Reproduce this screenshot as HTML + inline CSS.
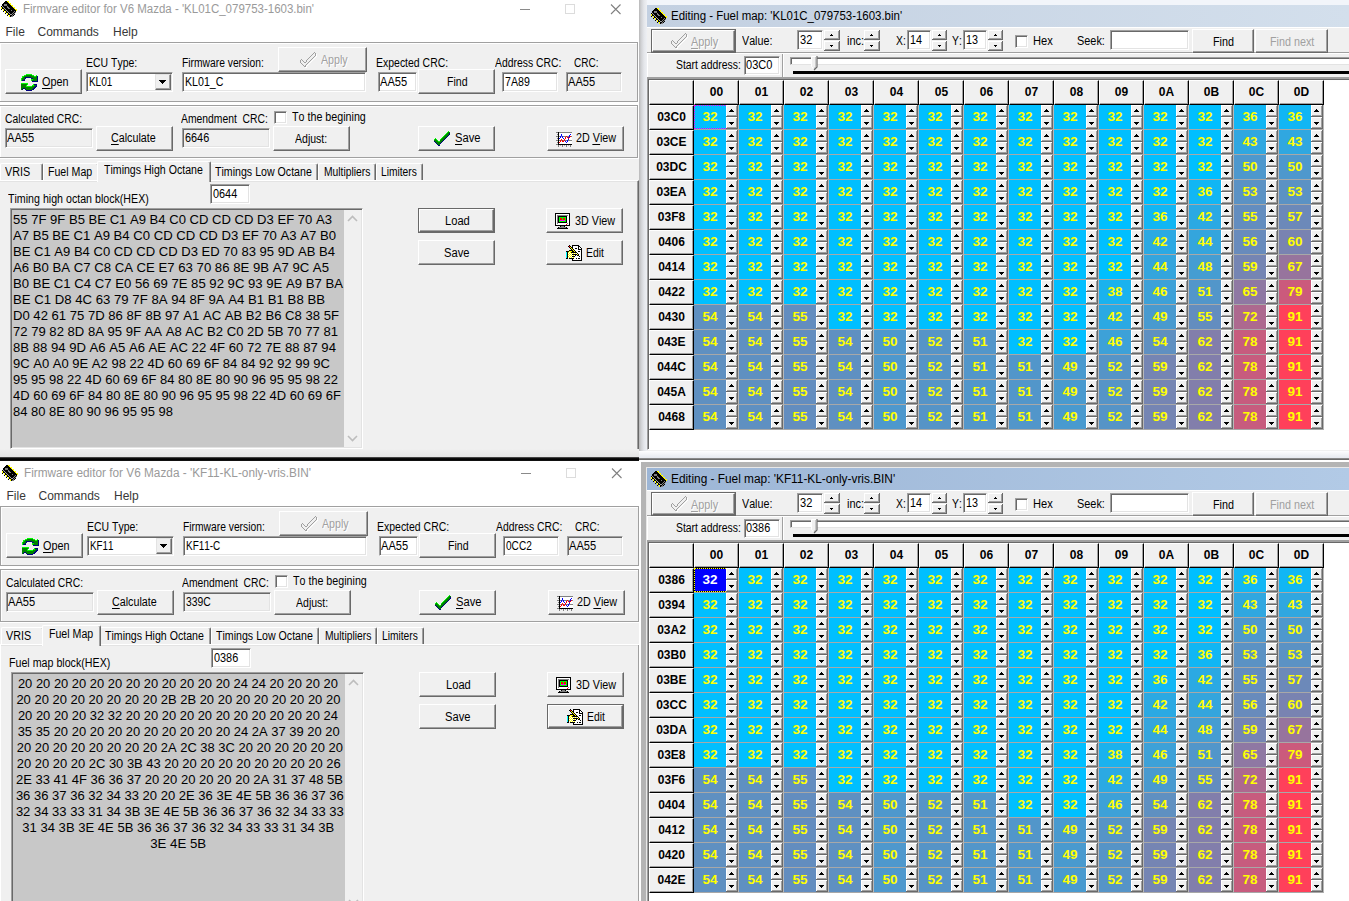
<!DOCTYPE html>
<html><head><meta charset="utf-8"><title>Firmware editor</title>
<style>
*{box-sizing:border-box;margin:0;padding:0}
html,body{width:1349px;height:901px;overflow:hidden;background:#fff}
body{position:relative;font-family:"Liberation Sans",sans-serif;color:#000}
.a{position:absolute}
.w{position:absolute;overflow:hidden}
/* MS Sans Serif-like label text: tall narrow */
.t{position:absolute;white-space:nowrap;font-kerning:none;font-size:12.5px;line-height:14px;height:14px;transform:scaleX(.83);transform-origin:0 0;color:#000}
.t u{text-decoration:none;border-bottom:1px solid #000;display:inline-block;line-height:12.6px;height:13.3px}
.dis{color:#a0a0a0}
.seg{position:absolute;white-space:nowrap;font-size:12px;line-height:14px;height:14px;transform-origin:0 0}
.btn{position:absolute;background:#f0f0f0;border-top:1px solid #fff;border-left:1px solid #fff;border-right:1px solid #696969;border-bottom:1px solid #696969;box-shadow:inset -1px -1px 0 #a0a0a0}
.def{position:absolute;background:#696969}
.inp{position:absolute;background:#fff;border-top:1px solid #a0a0a0;border-left:1px solid #a0a0a0;border-right:1px solid #fff;border-bottom:1px solid #fff;box-shadow:inset 1px 1px 0 #696969,inset -1px -1px 0 #e3e3e3}
.ro{background:#f0f0f0}
.pan{position:absolute;background:#f0f0f0;border:1px solid #a0a0a0;box-shadow:1px 1px 0 #fff,inset 1px 1px 0 #fff}
.chk{position:absolute;width:13px;height:13px;background:#fff;border-top:1px solid #a0a0a0;border-left:1px solid #a0a0a0;border-right:1px solid #fff;border-bottom:1px solid #fff;box-shadow:inset 1px 1px 0 #696969,inset -1px -1px 0 #e3e3e3}
.hx{position:absolute;font-kerning:none;font-size:13.33px;line-height:16px;white-space:nowrap;color:#000}
.hx div{height:16px}
/* grid */
.hc{position:absolute;background:#f0f0f0;border-top:1px solid #fff;border-left:1px solid #fff;border-right:1px solid #000;border-bottom:1px solid #000;box-shadow:inset -1px -1px 0 #a0a0a0;font-weight:bold;font-size:12px;text-align:center}
.c{position:absolute;width:45px;height:25px;border-right:1px solid #b8b8b8;border-bottom:1px solid #a8a8a8;font-weight:bold;font-size:13.5px;line-height:24px;color:#ff0;padding-right:12px;text-align:center}
.c i{position:absolute;left:32px;top:0;width:12px;height:24px}
.sp{position:absolute;width:11px;background:#f0f0f0;border-top:1px solid #fff;border-left:1px solid #fff;border-right:1px solid #696969;border-bottom:1px solid #696969;box-shadow:inset -1px -1px 0 #a0a0a0}
.c i{background:linear-gradient(#000,#000) 5px 4px/1px 1px no-repeat,linear-gradient(#000,#000) 4px 5px/3px 1px no-repeat,linear-gradient(#000,#000) 3px 6px/5px 1px no-repeat,linear-gradient(#000,#000) 3px 17px/5px 1px no-repeat,linear-gradient(#000,#000) 4px 18px/3px 1px no-repeat,linear-gradient(#000,#000) 5px 19px/1px 1px no-repeat,linear-gradient(#696969,#696969) 11px 0px/1px 12px no-repeat,linear-gradient(#696969,#696969) 0px 11px/12px 1px no-repeat,linear-gradient(#a0a0a0,#a0a0a0) 10px 1px/1px 10px no-repeat,linear-gradient(#a0a0a0,#a0a0a0) 1px 10px/10px 1px no-repeat,linear-gradient(#fff,#fff) 0px 0px/12px 1px no-repeat,linear-gradient(#fff,#fff) 0px 0px/1px 12px no-repeat,linear-gradient(#696969,#696969) 11px 12px/1px 12px no-repeat,linear-gradient(#696969,#696969) 0px 23px/12px 1px no-repeat,linear-gradient(#a0a0a0,#a0a0a0) 10px 13px/1px 10px no-repeat,linear-gradient(#a0a0a0,#a0a0a0) 1px 22px/10px 1px no-repeat,linear-gradient(#fff,#fff) 0px 12px/12px 1px no-repeat,linear-gradient(#fff,#fff) 0px 12px/1px 12px no-repeat,#f0f0f0}
.tsp{position:absolute;width:16px;height:21px;background:linear-gradient(#000,#000) 7px 4px/1px 1px no-repeat,linear-gradient(#000,#000) 6px 5px/3px 1px no-repeat,linear-gradient(#000,#000) 6px 15px/3px 1px no-repeat,linear-gradient(#000,#000) 7px 16px/1px 1px no-repeat,linear-gradient(#696969,#696969) 15px 0px/1px 10px no-repeat,linear-gradient(#696969,#696969) 0px 9px/16px 1px no-repeat,linear-gradient(#a0a0a0,#a0a0a0) 14px 1px/1px 8px no-repeat,linear-gradient(#a0a0a0,#a0a0a0) 1px 8px/14px 1px no-repeat,linear-gradient(#fff,#fff) 0px 0px/16px 1px no-repeat,linear-gradient(#fff,#fff) 0px 0px/1px 10px no-repeat,linear-gradient(#696969,#696969) 15px 11px/1px 10px no-repeat,linear-gradient(#696969,#696969) 0px 20px/16px 1px no-repeat,linear-gradient(#a0a0a0,#a0a0a0) 14px 12px/1px 8px no-repeat,linear-gradient(#a0a0a0,#a0a0a0) 1px 19px/14px 1px no-repeat,linear-gradient(#fff,#fff) 0px 11px/16px 1px no-repeat,linear-gradient(#fff,#fff) 0px 11px/1px 10px no-repeat,#f0f0f0}
.tsp.n{width:15px;background:linear-gradient(#000,#000) 7px 4px/1px 1px no-repeat,linear-gradient(#000,#000) 6px 5px/3px 1px no-repeat,linear-gradient(#000,#000) 6px 15px/3px 1px no-repeat,linear-gradient(#000,#000) 7px 16px/1px 1px no-repeat,linear-gradient(#696969,#696969) 14px 0px/1px 10px no-repeat,linear-gradient(#696969,#696969) 0px 9px/15px 1px no-repeat,linear-gradient(#a0a0a0,#a0a0a0) 13px 1px/1px 8px no-repeat,linear-gradient(#a0a0a0,#a0a0a0) 1px 8px/13px 1px no-repeat,linear-gradient(#fff,#fff) 0px 0px/15px 1px no-repeat,linear-gradient(#fff,#fff) 0px 0px/1px 10px no-repeat,linear-gradient(#696969,#696969) 14px 11px/1px 10px no-repeat,linear-gradient(#696969,#696969) 0px 20px/15px 1px no-repeat,linear-gradient(#a0a0a0,#a0a0a0) 13px 12px/1px 8px no-repeat,linear-gradient(#a0a0a0,#a0a0a0) 1px 19px/13px 1px no-repeat,linear-gradient(#fff,#fff) 0px 11px/15px 1px no-repeat,linear-gradient(#fff,#fff) 0px 11px/1px 10px no-repeat,#f0f0f0}
.v32{background:#00bfff}.v36{background:#11b6f4}.v38{background:#1ab2ee}.v42{background:#2ba9e3}.v43{background:#30a7e0}.v44{background:#34a5dd}.v46{background:#3da1d8}.v48{background:#459dd2}.v49{background:#499acf}.v50{background:#4e98cd}.v51{background:#5296ca}.v52{background:#5694c7}.v53{background:#5b92c4}.v54{background:#5f90c1}.v55{background:#638dbf}.v56{background:#688bbc}.v57{background:#6c89b9}.v59{background:#7585b3}.v60{background:#7983b1}.v62{background:#827eab}.v65{background:#8f78a3}.v67{background:#97749d}.v72{background:#ad698f}.v78{background:#c75c7e}.v79{background:#cb5a7c}.v91{background:#ff405a}
.foc{position:absolute;left:0;top:0;width:32px;height:24px;border:1px dotted #f0f;border-right:none !important;pointer-events:none}
</style></head>
<body>
<div class="w" style="left:-1px;top:0px;width:640px;height:461px;background:#fff"><div class="a" style="left:1px;top:0">
<svg class="a" style="left:0px;top:0px" width="18" height="18" viewBox="0 0 18 18" shape-rendering="crispEdges"><path fill="#000" d="M5 1h2v1h-2zM4 2h4v1h-4zM3 3h6v1h-6zM2 4h2v1h-2zM7 4h3v1h-3zM2 5h2v1h-2zM7 5h4v1h-4zM1 6h1v1h-1zM3 6h4v1h-4zM8 6h4v1h-4zM2 7h1v1h-1zM4 7h3v1h-3zM9 7h4v1h-4zM2 8h2v1h-2zM5 8h3v1h-3zM10 8h4v1h-4zM1 9h1v1h-1zM4 9h1v1h-1zM6 9h9v1h-9zM4 10h2v1h-2zM7 10h4v1h-4zM12 10h4v1h-4zM3 11h1v1h-1zM6 11h1v1h-1zM8 11h6v1h-6zM15 11h1v1h-1zM6 12h2v1h-2zM9 12h4v1h-4zM14 12h1v1h-1zM5 13h1v1h-1zM8 13h1v1h-1zM10 13h2v1h-2zM13 13h1v1h-1zM8 14h2v1h-2zM12 14h1v1h-1zM14 14h1v1h-1zM7 15h1v1h-1zM10 15h2v1h-2zM13 15h1v1h-1zM10 16h1v1h-1z"/><path fill="#ff0" d="M7 1h2v1h-2zM8 2h1v1h-1zM9 3h2v1h-2zM10 4h1v1h-1zM11 5h2v1h-2zM12 6h1v1h-1zM1 7h1v1h-1zM13 7h2v1h-2zM1 8h1v1h-1zM14 8h1v1h-1zM3 9h1v1h-1zM15 9h2v1h-2zM3 10h1v1h-1zM16 10h1v1h-1zM5 11h1v1h-1zM5 12h1v1h-1zM7 13h1v1h-1zM7 14h1v1h-1zM9 15h1v1h-1zM9 16h1v1h-1z"/><path fill="#808080" d="M4 4h3v1h-3zM4 5h3v1h-3zM7 6h1v1h-1zM7 7h2v1h-2zM8 8h2v1h-2zM11 10h1v1h-1zM14 11h1v1h-1zM13 12h1v1h-1zM15 12h1v1h-1zM12 13h1v1h-1zM14 13h1v1h-1zM13 14h1v1h-1zM12 15h1v1h-1zM11 16h2v1h-2z"/><path fill="#a0a0a0" d="M2 6h1v1h-1zM3 7h1v1h-1zM4 8h1v1h-1zM5 9h1v1h-1zM6 10h1v1h-1zM7 11h1v1h-1zM8 12h1v1h-1zM9 13h1v1h-1zM10 14h2v1h-2z"/></svg>
<span class="seg" style="left:22.5px;top:2.3px;color:#9a9a9a;font-size:12px;transform:scaleX(0.9570);">Firmvare editor for V6 Mazda - 'KL01C_079753-1603.bin'</span>
<svg class="a" style="left:515px;top:0" width="115" height="20" viewBox="0 0 115 20" fill="none"><path d="M5 9.5H15" stroke="#8a8a8a" stroke-width="1"/><rect x="50.5" y="4.5" width="9" height="9" stroke="#dcdcdc" stroke-width="1"/><path d="M96 4.5L105.5 14M105.5 4.5L96 14" stroke="#808080" stroke-width="1.1"/></svg>
<span class="seg" style="left:5.5px;top:24.8px;color:#383838;font-size:12px;">File</span>
<span class="seg" style="left:37.5px;top:24.8px;color:#383838;font-size:12px;">Commands</span>
<span class="seg" style="left:113.0px;top:24.8px;color:#383838;font-size:12px;">Help</span>
<div class="a" style="left:-1px;top:159px;width:640px;height:302px;background:#f0f0f0;"></div>
<div class="pan" style="left:-1px;top:42px;width:639px;height:60px"></div>
<div class="btn" style="left:5px;top:69px;width:77px;height:25px"></div>
<svg class="a" style="left:18px;top:72px" width="24" height="20" viewBox="0 0 24 20" shape-rendering="crispEdges"><path fill="#00ff00" d="M8 2h6v1h-6zM6 3h2v1h-2zM14 3h2v1h-2zM18 3h1v1h-1zM4 4h2v1h-2zM16 4h2v1h-2zM4 5h1v1h-1zM3 6h1v1h-1zM3 7h1v1h-1zM13 7h2v1h-2zM3 8h1v1h-1zM13 8h1v1h-1zM3 11h7v1h-7zM9 12h1v1h-1zM15 12h1v1h-1zM8 13h1v1h-1zM14 13h2v1h-2zM8 14h6v1h-6z"/><path fill="#008000" d="M8 3h6v1h-6zM6 4h10v1h-10zM18 4h1v1h-1zM5 5h2v1h-2zM13 5h6v1h-6zM4 6h3v1h-3zM15 6h4v1h-4zM4 7h2v1h-2zM15 7h4v1h-4zM14 8h5v1h-5zM3 12h6v1h-6zM3 13h5v1h-5zM16 13h2v1h-2zM3 14h5v1h-5zM14 14h3v1h-3zM3 15h13v1h-13zM3 16h2v1h-2zM7 16h8v1h-8zM3 17h1v1h-1zM8 17h6v1h-6z"/><path fill="#000080" d="M19 4h1v1h-1zM7 5h6v1h-6zM19 5h1v1h-1zM7 6h1v1h-1zM13 6h2v1h-2zM19 6h1v1h-1zM6 7h1v1h-1zM19 7h1v1h-1zM4 8h3v1h-3zM19 8h1v1h-1zM14 9h6v1h-6zM16 12h3v1h-3zM18 13h1v1h-1zM17 14h2v1h-2zM16 15h2v1h-2zM5 16h2v1h-2zM15 16h2v1h-2zM4 17h1v1h-1zM7 17h1v1h-1zM14 17h2v1h-2zM8 18h6v1h-6z"/></svg>
<span class="t " style="left:41.6px;top:74.7px;transform:scaleX(0.8662);"><u>O</u>pen</span>
<span class="t " style="left:86.2px;top:55.7px;transform:scaleX(0.8374);">ECU Type:</span>
<div class="inp" style="left:86px;top:72px;width:87px;height:20px;"></div>
<span class="t " style="left:89.1px;top:74.7px;transform:scaleX(0.7944);">KL01</span>
<div class="btn" style="left:155px;top:74px;width:16px;height:16px;border-top-color:#e3e3e3;border-left-color:#e3e3e3"></div>
<svg class="a" style="left:159px;top:80px" width="7" height="4" viewBox="0 0 7 4" shape-rendering="crispEdges"><path d="M0 0H7V1H6V2H5V3H4V4H3V3H2V2H1V1H0Z" fill="#000"/></svg>
<span class="t " style="left:181.8px;top:55.7px;transform:scaleX(0.8235);">Firmware version:</span>
<div class="inp" style="left:182px;top:72px;width:184px;height:20px;"></div>
<span class="t " style="left:185.0px;top:74.7px;transform:scaleX(0.8520);">KL01_C</span>
<div class="btn" style="left:278px;top:47px;width:89px;height:25px"></div>
<svg class="a" style="left:296px;top:49px" width="24" height="20" viewBox="0 0 24 20" shape-rendering="crispEdges"><path fill="#a0a0a0" d="M18 3h1v1h-1zM17 4h1v1h-1zM19 4h1v1h-1zM16 5h1v1h-1zM19 5h1v1h-1zM15 6h1v1h-1zM19 6h1v1h-1zM14 7h1v1h-1zM18 7h1v1h-1zM13 8h1v1h-1zM17 8h1v1h-1zM12 9h1v1h-1zM16 9h1v1h-1zM5 10h1v1h-1zM11 10h1v1h-1zM15 10h1v1h-1zM4 11h1v1h-1zM6 11h1v1h-1zM10 11h1v1h-1zM14 11h1v1h-1zM4 12h1v1h-1zM7 12h1v1h-1zM10 12h1v1h-1zM13 12h1v1h-1zM4 13h1v1h-1zM8 13h2v1h-2zM12 13h1v1h-1zM5 14h1v1h-1zM11 14h1v1h-1zM6 15h1v1h-1zM10 15h1v1h-1zM7 16h1v1h-1zM9 16h1v1h-1zM8 17h2v1h-2z"/><path fill="#f0f0f0" d="M18 4h1v1h-1zM17 5h2v1h-2zM16 6h3v1h-3zM15 7h3v1h-3zM14 8h3v1h-3zM13 9h3v1h-3zM12 10h3v1h-3zM5 11h1v1h-1zM11 11h3v1h-3zM5 12h2v1h-2zM11 12h2v1h-2zM5 13h3v1h-3zM10 13h2v1h-2zM6 14h5v1h-5zM7 15h3v1h-3zM8 16h1v1h-1z"/><path fill="#fff" d="M20 5h1v1h-1zM20 6h1v1h-1zM20 7h1v1h-1zM19 8h1v1h-1zM18 9h1v1h-1zM17 10h1v1h-1zM16 11h1v1h-1zM15 12h1v1h-1zM14 13h1v1h-1zM13 14h1v1h-1zM12 15h1v1h-1zM11 16h1v1h-1zM10 17h1v1h-1zM9 18h2v1h-2z"/></svg>
<span class="t dis" style="left:321.5px;top:53.7px;transform:scaleX(0.8503);color:#fff">Apply</span>
<span class="t dis" style="left:320.5px;top:52.7px;transform:scaleX(0.8503);">Apply</span>
<span class="t " style="left:375.9px;top:55.7px;transform:scaleX(0.8380);">Expected CRC:</span>
<div class="inp" style="left:378px;top:72px;width:39px;height:20px;"></div>
<span class="t " style="left:379.9px;top:74.7px;transform:scaleX(0.8891);">AA55</span>
<div class="btn" style="left:418px;top:69px;width:77px;height:25px"></div>
<span class="t " style="left:446.9px;top:74.7px;transform:scaleX(0.8468);">Find</span>
<span class="t " style="left:495.3px;top:55.7px;transform:scaleX(0.8311);">Address CRC:</span>
<div class="inp" style="left:502px;top:72px;width:56px;height:20px;"></div>
<span class="t " style="left:504.9px;top:74.7px;transform:scaleX(0.8492);">7A89</span>
<span class="t " style="left:573.5px;top:55.7px;transform:scaleX(0.8049);">CRC:</span>
<div class="inp ro" style="left:566px;top:72px;width:56px;height:20px;"></div>
<span class="t " style="left:567.9px;top:74.7px;transform:scaleX(0.8891);">AA55</span>
<div class="pan" style="left:-1px;top:105px;width:639px;height:53px"></div>
<span class="t " style="left:4.9px;top:111.7px;transform:scaleX(0.8293);">Calculated CRC:</span>
<div class="inp ro" style="left:5px;top:128px;width:88px;height:20px;"></div>
<span class="t " style="left:7.1px;top:130.7px;transform:scaleX(0.8891);">AA55</span>
<div class="btn" style="left:96px;top:126px;width:77px;height:25px"></div>
<span class="t " style="left:111.3px;top:130.7px;transform:scaleX(0.8595);"><u>C</u>alculate</span>
<span class="t " style="left:181.3px;top:111.7px;transform:scaleX(0.8274);">Amendment&nbsp; CRC:</span>
<div class="inp ro" style="left:182px;top:128px;width:88px;height:20px;"></div>
<span class="t " style="left:184.7px;top:130.7px;transform:scaleX(0.8701);">6646</span>
<div class="chk" style="left:274px;top:111px"></div>
<span class="t " style="left:292.3px;top:109.7px;transform:scaleX(0.8563);">To the begining</span>
<div class="btn" style="left:273px;top:126px;width:77px;height:25px"></div>
<span class="t " style="left:295.3px;top:131.7px;transform:scaleX(0.8425);">Adjust:</span>
<div class="btn" style="left:418px;top:126px;width:77px;height:25px"></div>
<svg class="a" style="left:430px;top:128px" width="24" height="20" viewBox="0 0 24 20" shape-rendering="crispEdges"><path fill="#00ff00" d="M18 3h1v1h-1zM17 4h1v1h-1zM16 5h1v1h-1zM15 6h1v1h-1zM14 7h1v1h-1zM13 8h1v1h-1zM12 9h1v1h-1zM5 10h1v1h-1zM11 10h1v1h-1zM4 11h1v1h-1zM6 11h1v1h-1zM10 11h1v1h-1zM7 12h1v1h-1zM8 13h2v1h-2z"/><path fill="#008000" d="M18 4h2v1h-2zM17 5h2v1h-2zM16 6h3v1h-3zM15 7h3v1h-3zM14 8h3v1h-3zM13 9h3v1h-3zM12 10h3v1h-3zM5 11h1v1h-1zM11 11h3v1h-3zM4 12h3v1h-3zM10 12h3v1h-3zM5 13h3v1h-3zM10 13h2v1h-2zM6 14h5v1h-5zM7 15h3v1h-3zM8 16h2v1h-2z"/><path fill="#000080" d="M19 5h1v1h-1zM19 6h1v1h-1zM18 7h1v1h-1zM17 8h1v1h-1zM16 9h1v1h-1zM15 10h1v1h-1zM14 11h1v1h-1zM13 12h1v1h-1zM4 13h1v1h-1zM12 13h1v1h-1zM5 14h1v1h-1zM11 14h1v1h-1zM6 15h1v1h-1zM10 15h1v1h-1zM7 16h1v1h-1zM8 17h2v1h-2z"/></svg>
<span class="t " style="left:454.6px;top:131.0px;transform:scaleX(0.8947);"><u>S</u>ave</span>
<div class="btn" style="left:547px;top:126px;width:77px;height:25px"></div>
<svg class="a" style="left:553px;top:129px" width="24" height="20" viewBox="0 0 24 20" shape-rendering="crispEdges"><path fill="#808080" d="M3 3h2v1h-2zM6 3h13v1h-13zM4 5h1v1h-1zM3 7h2v1h-2zM6 7h1v1h-1zM8 7h1v1h-1zM10 7h3v1h-3zM14 7h2v1h-2zM18 7h1v1h-1zM4 9h1v1h-1zM3 11h2v1h-2zM6 11h1v1h-1zM8 11h1v1h-1zM10 11h1v1h-1zM12 11h2v1h-2zM15 11h4v1h-4zM4 13h1v1h-1zM3 15h2v1h-2zM5 16h1v1h-1zM9 16h1v1h-1zM13 16h1v1h-1zM17 16h1v1h-1zM5 17h1v1h-1zM9 17h1v1h-1zM13 17h1v1h-1zM17 17h1v1h-1z"/><path fill="#000" d="M5 3h1v1h-1zM5 4h1v1h-1zM5 5h1v1h-1zM5 6h1v1h-1zM5 7h1v1h-1zM5 8h1v1h-1zM5 9h1v1h-1zM5 10h1v1h-1zM5 11h1v1h-1zM5 12h1v1h-1zM5 13h1v1h-1zM5 14h1v1h-1zM5 15h14v1h-14z"/><path fill="#fff" d="M6 4h13v1h-13zM6 5h2v1h-2zM9 5h8v1h-8zM18 5h1v1h-1zM6 6h2v1h-2zM9 6h7v1h-7zM17 6h2v1h-2zM6 8h1v1h-1zM8 8h1v1h-1zM10 8h2v1h-2zM13 8h1v1h-1zM17 8h2v1h-2zM7 9h3v1h-3zM11 9h1v1h-1zM13 9h2v1h-2zM16 9h3v1h-3zM6 10h2v1h-2zM9 10h2v1h-2zM12 10h3v1h-3zM16 10h3v1h-3zM6 12h1v1h-1zM8 12h1v1h-1zM11 12h1v1h-1zM13 12h1v1h-1zM15 12h4v1h-4zM7 13h6v1h-6zM14 13h5v1h-5zM6 14h13v1h-13z"/><path fill="#00f" d="M8 5h1v1h-1zM17 5h1v1h-1zM8 6h1v1h-1zM16 6h1v1h-1zM7 7h1v1h-1zM9 7h1v1h-1zM16 7h1v1h-1zM7 8h1v1h-1zM9 8h1v1h-1zM15 8h1v1h-1zM6 9h1v1h-1zM10 9h1v1h-1zM15 10h1v1h-1zM14 11h1v1h-1zM12 12h1v1h-1zM14 12h1v1h-1zM13 13h1v1h-1z"/><path fill="#f00" d="M13 7h1v1h-1zM17 7h1v1h-1zM12 8h1v1h-1zM14 8h1v1h-1zM16 8h1v1h-1zM12 9h1v1h-1zM15 9h1v1h-1zM8 10h1v1h-1zM11 10h1v1h-1zM7 11h1v1h-1zM9 11h1v1h-1zM11 11h1v1h-1zM7 12h1v1h-1zM9 12h2v1h-2zM6 13h1v1h-1z"/><path fill="#b0b0b0" d="M7 16h1v1h-1zM11 16h1v1h-1zM15 16h1v1h-1z"/></svg>
<span class="t " style="left:576.0px;top:131.0px;transform:scaleX(0.8615);">2D <u>V</u>iew</span>
<div class="a" style="left:-1px;top:180px;width:640px;height:286px;background:#f0f0f0;border-top:1px solid #fff;border-left:1px solid #fff;border-right:1px solid #696969;box-shadow:inset -1px 0 0 #a0a0a0, inset 0 1px 0 #e3e3e3"></div>
<div class="a" style="left:0px;top:163px;width:43px;height:17px;background:#f0f0f0;border-top:1px solid #fff;border-left:1px solid #fff;border-right:1px solid #696969;box-shadow:inset -1px 0 0 #a0a0a0;border-radius:2px 2px 0 0"></div>
<span class="t " style="left:5.3px;top:164.7px;transform:scaleX(0.8634);">VRIS</span>
<div class="a" style="left:43px;top:163px;width:56px;height:17px;background:#f0f0f0;border-top:1px solid #fff;border-left:1px solid #fff;border-right:1px solid #696969;box-shadow:inset -1px 0 0 #a0a0a0;border-radius:2px 2px 0 0"></div>
<span class="t " style="left:47.9px;top:164.7px;transform:scaleX(0.8482);">Fuel Map</span>
<div class="a" style="left:210px;top:163px;width:108px;height:17px;background:#f0f0f0;border-top:1px solid #fff;border-left:1px solid #fff;border-right:1px solid #696969;box-shadow:inset -1px 0 0 #a0a0a0;border-radius:2px 2px 0 0"></div>
<span class="t " style="left:215.3px;top:164.7px;transform:scaleX(0.8496);">Timings Low Octane</span>
<div class="a" style="left:318px;top:163px;width:58px;height:17px;background:#f0f0f0;border-top:1px solid #fff;border-left:1px solid #fff;border-right:1px solid #696969;box-shadow:inset -1px 0 0 #a0a0a0;border-radius:2px 2px 0 0"></div>
<span class="t " style="left:323.7px;top:164.7px;transform:scaleX(0.8247);">Multipliers</span>
<div class="a" style="left:376px;top:163px;width:47px;height:17px;background:#f0f0f0;border-top:1px solid #fff;border-left:1px solid #fff;border-right:1px solid #696969;box-shadow:inset -1px 0 0 #a0a0a0;border-radius:2px 2px 0 0"></div>
<span class="t " style="left:381.3px;top:164.7px;transform:scaleX(0.8180);">Limiters</span>
<div class="a" style="left:97px;top:161px;width:114px;height:21px;background:#f0f0f0;border-top:1px solid #fff;border-left:1px solid #fff;border-right:1px solid #696969;box-shadow:inset -1px 0 0 #a0a0a0;border-radius:2px 2px 0 0"></div>
<span class="t " style="left:104.3px;top:162.7px;transform:scaleX(0.8465);">Timings High Octane</span>
<span class="t " style="left:8.3px;top:191.7px;transform:scaleX(0.8515);">Timing high octan block(HEX)</span>
<div class="inp" style="left:210px;top:184px;width:40px;height:20px;"></div>
<span class="t " style="left:212.9px;top:186.7px;transform:scaleX(0.8701);">0644</span>
<div class="inp" style="left:10px;top:208px;width:353px;height:241px;background:#f0f0f0"></div>
<div class="a" style="left:12px;top:210px;width:332px;height:237px;background:#c8c8c8;"></div>
<svg class="a" style="left:347px;top:215px" width="11" height="7" viewBox="0 0 11 7"><path d="M1 6L5.5 1.5L10 6" fill="none" stroke="#bdbdbd" stroke-width="1.6"/></svg>
<svg class="a" style="left:347px;top:435px" width="11" height="7" viewBox="0 0 11 7"><path d="M1 1L5.5 5.5L10 1" fill="none" stroke="#bdbdbd" stroke-width="1.6"/></svg>
<div class="hx" style="left:12.9px;top:211.7px">
<div><span style="display:inline-block;transform:scaleX(0.9808);transform-origin:0 0">55 7F 9F B5 BE C1 A9 B4 C0 CD CD CD D3 EF 70 A3</span></div>
<div><span style="display:inline-block;transform:scaleX(0.9841);transform-origin:0 0">A7 B5 BE C1 A9 B4 C0 CD CD CD D3 EF 70 A3 A7 B0</span></div>
<div><span style="display:inline-block;transform:scaleX(0.9789);transform-origin:0 0">BE C1 A9 B4 C0 CD CD CD D3 ED 70 83 95 9D AB B4</span></div>
<div><span style="display:inline-block;transform:scaleX(0.9872);transform-origin:0 0">A6 B0 BA C7 C8 CA CE E7 63 70 86 8E 9B A7 9C A5</span></div>
<div><span style="display:inline-block;transform:scaleX(0.9852);transform-origin:0 0">B0 BE C1 C4 C7 E0 56 69 7E 85 92 9C 93 9E A9 B7 BA</span></div>
<div><span style="display:inline-block;transform:scaleX(0.9884);transform-origin:0 0">BE C1 D8 4C 63 79 7F 8A 94 8F 9A A4 B1 B1 B8 BB</span></div>
<div><span style="display:inline-block;transform:scaleX(0.9820);transform-origin:0 0">D0 42 61 75 7D 86 8F 8B 97 A1 AC AB B2 B6 C8 38 5F</span></div>
<div><span style="display:inline-block;transform:scaleX(0.9812);transform-origin:0 0">72 79 82 8D 8A 95 9F AA A8 AC B2 C0 2D 5B 70 77 81</span></div>
<div><span style="display:inline-block;transform:scaleX(0.9839);transform-origin:0 0">8B 88 94 9D A6 A5 A6 AE AC 22 4F 60 72 7E 88 87 94</span></div>
<div><span style="display:inline-block;transform:scaleX(0.9766);transform-origin:0 0">9C A0 A0 9E A2 98 22 4D 60 69 6F 84 84 92 92 99 9C</span></div>
<div><span style="display:inline-block;transform:scaleX(0.9723);transform-origin:0 0">95 95 98 22 4D 60 69 6F 84 80 8E 80 90 96 95 95 98 22</span></div>
<div><span style="display:inline-block;transform:scaleX(0.9727);transform-origin:0 0">4D 60 69 6F 84 80 8E 80 90 96 95 95 98 22 4D 60 69 6F</span></div>
<div><span style="display:inline-block;transform:scaleX(0.9724);transform-origin:0 0">84 80 8E 80 90 96 95 95 98</span></div>
</div>
<div class="def" style="left:418px;top:208px;width:77px;height:25px"></div>
<div class="btn" style="left:419px;top:209px;width:75px;height:23px"></div>
<span class="t " style="left:444.9px;top:213.7px;transform:scaleX(0.8917);">Load</span>
<div class="btn" style="left:418px;top:240px;width:77px;height:25px"></div>
<span class="t " style="left:443.8px;top:245.7px;transform:scaleX(0.8947);">Save</span>
<div class="btn" style="left:546px;top:208px;width:77px;height:25px"></div>
<svg class="a" style="left:551px;top:210px" width="24" height="20" viewBox="0 0 24 20" shape-rendering="crispEdges"><path fill="#000" d="M4 3h15v1h-15zM4 4h1v1h-1zM18 4h1v1h-1zM4 5h1v1h-1zM18 5h1v1h-1zM4 6h1v1h-1zM7 6h9v1h-9zM18 6h1v1h-1zM4 7h1v1h-1zM7 7h1v1h-1zM15 7h1v1h-1zM18 7h1v1h-1zM4 8h1v1h-1zM7 8h1v1h-1zM15 8h1v1h-1zM18 8h1v1h-1zM4 9h1v1h-1zM7 9h1v1h-1zM15 9h1v1h-1zM18 9h1v1h-1zM4 10h1v1h-1zM7 10h1v1h-1zM15 10h1v1h-1zM18 10h1v1h-1zM4 11h1v1h-1zM7 11h1v1h-1zM15 11h1v1h-1zM18 11h1v1h-1zM4 12h1v1h-1zM7 12h9v1h-9zM18 12h1v1h-1zM4 13h1v1h-1zM18 13h1v1h-1zM4 14h1v1h-1zM18 14h1v1h-1zM4 15h15v1h-15zM9 16h1v1h-1zM13 16h1v1h-1zM7 17h1v1h-1zM15 17h1v1h-1zM6 18h11v1h-11z"/><path fill="#fff" d="M5 4h13v1h-13zM5 5h1v1h-1zM17 5h1v1h-1zM5 6h1v1h-1zM16 6h2v1h-2zM5 7h1v1h-1zM16 7h2v1h-2zM5 8h1v1h-1zM16 8h2v1h-2zM5 9h1v1h-1zM16 9h2v1h-2zM5 10h1v1h-1zM16 10h2v1h-2zM5 11h1v1h-1zM16 11h2v1h-2zM5 12h1v1h-1zM16 12h2v1h-2zM5 13h1v1h-1zM7 13h9v1h-9zM17 13h1v1h-1zM5 14h10v1h-10zM16 14h2v1h-2z"/><path fill="#808080" d="M6 5h11v1h-11zM6 6h1v1h-1zM6 7h1v1h-1zM6 8h1v1h-1zM6 9h1v1h-1zM6 10h1v1h-1zM6 11h1v1h-1zM6 12h1v1h-1zM6 13h1v1h-1zM16 13h1v1h-1zM10 16h3v1h-3zM8 17h7v1h-7z"/><path fill="#0f0" d="M8 7h7v1h-7zM8 8h1v1h-1zM11 8h1v1h-1zM14 8h1v1h-1zM8 9h1v1h-1zM11 9h1v1h-1zM14 9h1v1h-1zM8 10h1v1h-1zM14 10h1v1h-1zM8 11h7v1h-7z"/><path fill="#f00" d="M9 8h2v1h-2zM12 8h2v1h-2zM9 9h2v1h-2zM12 9h2v1h-2zM15 14h1v1h-1z"/><path fill="#f0f" d="M9 10h5v1h-5z"/></svg>
<span class="t " style="left:575.0px;top:213.7px;transform:scaleX(0.8615);">3D View</span>
<div class="btn" style="left:546px;top:240px;width:77px;height:25px"></div>
<svg class="a" style="left:562px;top:242px" width="24" height="20" viewBox="0 0 24 20" shape-rendering="crispEdges"><path fill="#000" d="M7 3h1v1h-1zM10 3h7v1h-7zM6 4h1v1h-1zM8 4h1v1h-1zM10 4h1v1h-1zM16 4h2v1h-2zM7 5h1v1h-1zM9 5h2v1h-2zM16 5h1v1h-1zM18 5h1v1h-1zM8 6h1v1h-1zM10 6h1v1h-1zM13 6h2v1h-2zM16 6h1v1h-1zM19 6h1v1h-1zM9 7h1v1h-1zM11 7h1v1h-1zM16 7h4v1h-4zM7 8h4v1h-4zM12 8h1v1h-1zM19 8h1v1h-1zM4 9h3v1h-3zM10 9h2v1h-2zM13 9h1v1h-1zM16 9h2v1h-2zM19 9h1v1h-1zM5 10h1v1h-1zM9 10h6v1h-6zM19 10h1v1h-1zM5 11h1v1h-1zM15 11h1v1h-1zM19 11h1v1h-1zM5 12h1v1h-1zM10 12h5v1h-5zM16 12h1v1h-1zM19 12h1v1h-1zM5 13h1v1h-1zM13 13h1v1h-1zM15 13h2v1h-2zM19 13h1v1h-1zM5 14h1v1h-1zM10 14h3v1h-3zM17 14h1v1h-1zM19 14h1v1h-1zM5 15h1v1h-1zM19 15h1v1h-1zM4 16h2v1h-2zM7 16h5v1h-5zM14 16h1v1h-1zM16 16h2v1h-2zM19 16h1v1h-1zM10 17h1v1h-1zM19 17h1v1h-1zM10 18h10v1h-10z"/><path fill="#f00" d="M7 4h1v1h-1z"/><path fill="#fff" d="M11 4h5v1h-5zM11 5h5v1h-5zM17 5h1v1h-1zM11 6h2v1h-2zM15 6h1v1h-1zM17 6h2v1h-2zM12 7h4v1h-4zM13 8h6v1h-6zM14 9h2v1h-2zM18 9h1v1h-1zM7 10h1v1h-1zM15 10h4v1h-4zM6 11h1v1h-1zM8 11h1v1h-1zM10 11h1v1h-1zM12 11h1v1h-1zM14 11h1v1h-1zM16 11h3v1h-3zM7 12h1v1h-1zM9 12h1v1h-1zM17 12h2v1h-2zM6 13h1v1h-1zM8 13h1v1h-1zM10 13h1v1h-1zM12 13h1v1h-1zM14 13h1v1h-1zM17 13h2v1h-2zM7 14h1v1h-1zM9 14h1v1h-1zM13 14h4v1h-4zM18 14h1v1h-1zM6 15h1v1h-1zM8 15h1v1h-1zM10 15h1v1h-1zM12 15h7v1h-7zM12 16h2v1h-2zM15 16h1v1h-1zM18 16h1v1h-1zM11 17h8v1h-8z"/><path fill="#ff0" d="M8 5h1v1h-1zM9 6h1v1h-1zM10 7h1v1h-1zM11 8h1v1h-1zM7 9h3v1h-3zM12 9h1v1h-1zM6 10h1v1h-1zM8 10h1v1h-1zM7 11h1v1h-1zM9 11h1v1h-1zM11 11h1v1h-1zM13 11h1v1h-1zM6 12h1v1h-1zM8 12h1v1h-1zM15 12h1v1h-1zM7 13h1v1h-1zM9 13h1v1h-1zM11 13h1v1h-1zM6 14h1v1h-1zM8 14h1v1h-1zM7 15h1v1h-1zM9 15h1v1h-1zM11 15h1v1h-1z"/><path fill="#0ff" d="M4 10h1v1h-1zM4 11h1v1h-1zM4 12h1v1h-1zM4 13h1v1h-1zM4 14h1v1h-1zM4 15h1v1h-1z"/></svg>
<span class="t " style="left:586.2px;top:245.7px;transform:scaleX(0.8307);">Edit</span>
</div></div>
<div class="a" style="left:0;top:449px;width:639px;height:9px;background:linear-gradient(#f0f0f0,#e4e4e4)"></div>
<div class="a" style="left:0;top:457px;width:639px;height:4px;background:linear-gradient(#777 0,#111 1px,#000 3px,#222 4px)"></div>
<div class="w" style="left:0px;top:464px;width:640px;height:440px;background:#fff"><div class="a" style="left:1px;top:0">
<svg class="a" style="left:0px;top:0px" width="18" height="18" viewBox="0 0 18 18" shape-rendering="crispEdges"><path fill="#000" d="M5 1h2v1h-2zM4 2h4v1h-4zM3 3h6v1h-6zM2 4h2v1h-2zM7 4h3v1h-3zM2 5h2v1h-2zM7 5h4v1h-4zM1 6h1v1h-1zM3 6h4v1h-4zM8 6h4v1h-4zM2 7h1v1h-1zM4 7h3v1h-3zM9 7h4v1h-4zM2 8h2v1h-2zM5 8h3v1h-3zM10 8h4v1h-4zM1 9h1v1h-1zM4 9h1v1h-1zM6 9h9v1h-9zM4 10h2v1h-2zM7 10h4v1h-4zM12 10h4v1h-4zM3 11h1v1h-1zM6 11h1v1h-1zM8 11h6v1h-6zM15 11h1v1h-1zM6 12h2v1h-2zM9 12h4v1h-4zM14 12h1v1h-1zM5 13h1v1h-1zM8 13h1v1h-1zM10 13h2v1h-2zM13 13h1v1h-1zM8 14h2v1h-2zM12 14h1v1h-1zM14 14h1v1h-1zM7 15h1v1h-1zM10 15h2v1h-2zM13 15h1v1h-1zM10 16h1v1h-1z"/><path fill="#ff0" d="M7 1h2v1h-2zM8 2h1v1h-1zM9 3h2v1h-2zM10 4h1v1h-1zM11 5h2v1h-2zM12 6h1v1h-1zM1 7h1v1h-1zM13 7h2v1h-2zM1 8h1v1h-1zM14 8h1v1h-1zM3 9h1v1h-1zM15 9h2v1h-2zM3 10h1v1h-1zM16 10h1v1h-1zM5 11h1v1h-1zM5 12h1v1h-1zM7 13h1v1h-1zM7 14h1v1h-1zM9 15h1v1h-1zM9 16h1v1h-1z"/><path fill="#808080" d="M4 4h3v1h-3zM4 5h3v1h-3zM7 6h1v1h-1zM7 7h2v1h-2zM8 8h2v1h-2zM11 10h1v1h-1zM14 11h1v1h-1zM13 12h1v1h-1zM15 12h1v1h-1zM12 13h1v1h-1zM14 13h1v1h-1zM13 14h1v1h-1zM12 15h1v1h-1zM11 16h2v1h-2z"/><path fill="#a0a0a0" d="M2 6h1v1h-1zM3 7h1v1h-1zM4 8h1v1h-1zM5 9h1v1h-1zM6 10h1v1h-1zM7 11h1v1h-1zM8 12h1v1h-1zM9 13h1v1h-1zM10 14h2v1h-2z"/></svg>
<span class="seg" style="left:22.5px;top:2.3px;color:#9a9a9a;font-size:12px;transform:scaleX(0.9836);">Firmware editor for V6 Mazda - 'KF11-KL-only-vris.BIN'</span>
<svg class="a" style="left:515px;top:0" width="115" height="20" viewBox="0 0 115 20" fill="none"><path d="M5 9.5H15" stroke="#8a8a8a" stroke-width="1"/><rect x="50.5" y="4.5" width="9" height="9" stroke="#dcdcdc" stroke-width="1"/><path d="M96 4.5L105.5 14M105.5 4.5L96 14" stroke="#808080" stroke-width="1.1"/></svg>
<span class="seg" style="left:5.5px;top:24.8px;color:#383838;font-size:12px;">File</span>
<span class="seg" style="left:37.5px;top:24.8px;color:#383838;font-size:12px;">Commands</span>
<span class="seg" style="left:113.0px;top:24.8px;color:#383838;font-size:12px;">Help</span>
<div class="a" style="left:-1px;top:159px;width:640px;height:281px;background:#f0f0f0;"></div>
<div class="pan" style="left:-1px;top:42px;width:639px;height:60px"></div>
<div class="btn" style="left:5px;top:69px;width:77px;height:25px"></div>
<svg class="a" style="left:18px;top:72px" width="24" height="20" viewBox="0 0 24 20" shape-rendering="crispEdges"><path fill="#00ff00" d="M8 2h6v1h-6zM6 3h2v1h-2zM14 3h2v1h-2zM18 3h1v1h-1zM4 4h2v1h-2zM16 4h2v1h-2zM4 5h1v1h-1zM3 6h1v1h-1zM3 7h1v1h-1zM13 7h2v1h-2zM3 8h1v1h-1zM13 8h1v1h-1zM3 11h7v1h-7zM9 12h1v1h-1zM15 12h1v1h-1zM8 13h1v1h-1zM14 13h2v1h-2zM8 14h6v1h-6z"/><path fill="#008000" d="M8 3h6v1h-6zM6 4h10v1h-10zM18 4h1v1h-1zM5 5h2v1h-2zM13 5h6v1h-6zM4 6h3v1h-3zM15 6h4v1h-4zM4 7h2v1h-2zM15 7h4v1h-4zM14 8h5v1h-5zM3 12h6v1h-6zM3 13h5v1h-5zM16 13h2v1h-2zM3 14h5v1h-5zM14 14h3v1h-3zM3 15h13v1h-13zM3 16h2v1h-2zM7 16h8v1h-8zM3 17h1v1h-1zM8 17h6v1h-6z"/><path fill="#000080" d="M19 4h1v1h-1zM7 5h6v1h-6zM19 5h1v1h-1zM7 6h1v1h-1zM13 6h2v1h-2zM19 6h1v1h-1zM6 7h1v1h-1zM19 7h1v1h-1zM4 8h3v1h-3zM19 8h1v1h-1zM14 9h6v1h-6zM16 12h3v1h-3zM18 13h1v1h-1zM17 14h2v1h-2zM16 15h2v1h-2zM5 16h2v1h-2zM15 16h2v1h-2zM4 17h1v1h-1zM7 17h1v1h-1zM14 17h2v1h-2zM8 18h6v1h-6z"/></svg>
<span class="t " style="left:41.6px;top:74.7px;transform:scaleX(0.8662);"><u>O</u>pen</span>
<span class="t " style="left:86.2px;top:55.7px;transform:scaleX(0.8374);">ECU Type:</span>
<div class="inp" style="left:86px;top:72px;width:87px;height:20px;"></div>
<span class="t " style="left:89.1px;top:74.7px;transform:scaleX(0.7829);">KF11</span>
<div class="btn" style="left:155px;top:74px;width:16px;height:16px;border-top-color:#e3e3e3;border-left-color:#e3e3e3"></div>
<svg class="a" style="left:159px;top:80px" width="7" height="4" viewBox="0 0 7 4" shape-rendering="crispEdges"><path d="M0 0H7V1H6V2H5V3H4V4H3V3H2V2H1V1H0Z" fill="#000"/></svg>
<span class="t " style="left:181.8px;top:55.7px;transform:scaleX(0.8235);">Firmware version:</span>
<div class="inp" style="left:182px;top:72px;width:184px;height:20px;"></div>
<span class="t " style="left:185.0px;top:74.7px;transform:scaleX(0.7962);">KF11-C</span>
<div class="btn" style="left:278px;top:47px;width:89px;height:25px"></div>
<svg class="a" style="left:296px;top:49px" width="24" height="20" viewBox="0 0 24 20" shape-rendering="crispEdges"><path fill="#a0a0a0" d="M18 3h1v1h-1zM17 4h1v1h-1zM19 4h1v1h-1zM16 5h1v1h-1zM19 5h1v1h-1zM15 6h1v1h-1zM19 6h1v1h-1zM14 7h1v1h-1zM18 7h1v1h-1zM13 8h1v1h-1zM17 8h1v1h-1zM12 9h1v1h-1zM16 9h1v1h-1zM5 10h1v1h-1zM11 10h1v1h-1zM15 10h1v1h-1zM4 11h1v1h-1zM6 11h1v1h-1zM10 11h1v1h-1zM14 11h1v1h-1zM4 12h1v1h-1zM7 12h1v1h-1zM10 12h1v1h-1zM13 12h1v1h-1zM4 13h1v1h-1zM8 13h2v1h-2zM12 13h1v1h-1zM5 14h1v1h-1zM11 14h1v1h-1zM6 15h1v1h-1zM10 15h1v1h-1zM7 16h1v1h-1zM9 16h1v1h-1zM8 17h2v1h-2z"/><path fill="#f0f0f0" d="M18 4h1v1h-1zM17 5h2v1h-2zM16 6h3v1h-3zM15 7h3v1h-3zM14 8h3v1h-3zM13 9h3v1h-3zM12 10h3v1h-3zM5 11h1v1h-1zM11 11h3v1h-3zM5 12h2v1h-2zM11 12h2v1h-2zM5 13h3v1h-3zM10 13h2v1h-2zM6 14h5v1h-5zM7 15h3v1h-3zM8 16h1v1h-1z"/><path fill="#fff" d="M20 5h1v1h-1zM20 6h1v1h-1zM20 7h1v1h-1zM19 8h1v1h-1zM18 9h1v1h-1zM17 10h1v1h-1zM16 11h1v1h-1zM15 12h1v1h-1zM14 13h1v1h-1zM13 14h1v1h-1zM12 15h1v1h-1zM11 16h1v1h-1zM10 17h1v1h-1zM9 18h2v1h-2z"/></svg>
<span class="t dis" style="left:321.5px;top:53.7px;transform:scaleX(0.8503);color:#fff">Apply</span>
<span class="t dis" style="left:320.5px;top:52.7px;transform:scaleX(0.8503);">Apply</span>
<span class="t " style="left:375.9px;top:55.7px;transform:scaleX(0.8380);">Expected CRC:</span>
<div class="inp" style="left:378px;top:72px;width:39px;height:20px;"></div>
<span class="t " style="left:379.9px;top:74.7px;transform:scaleX(0.8891);">AA55</span>
<div class="btn" style="left:418px;top:69px;width:77px;height:25px"></div>
<span class="t " style="left:446.9px;top:74.7px;transform:scaleX(0.8468);">Find</span>
<span class="t " style="left:495.3px;top:55.7px;transform:scaleX(0.8311);">Address CRC:</span>
<div class="inp" style="left:502px;top:72px;width:56px;height:20px;"></div>
<span class="t " style="left:504.9px;top:74.7px;transform:scaleX(0.8070);">0CC2</span>
<span class="t " style="left:573.5px;top:55.7px;transform:scaleX(0.8049);">CRC:</span>
<div class="inp ro" style="left:566px;top:72px;width:56px;height:20px;"></div>
<span class="t " style="left:567.9px;top:74.7px;transform:scaleX(0.8891);">AA55</span>
<div class="pan" style="left:-1px;top:105px;width:639px;height:53px"></div>
<span class="t " style="left:4.9px;top:111.7px;transform:scaleX(0.8293);">Calculated CRC:</span>
<div class="inp ro" style="left:5px;top:128px;width:88px;height:20px;"></div>
<span class="t " style="left:7.1px;top:130.7px;transform:scaleX(0.8891);">AA55</span>
<div class="btn" style="left:96px;top:126px;width:77px;height:25px"></div>
<span class="t " style="left:111.3px;top:130.7px;transform:scaleX(0.8595);"><u>C</u>alculate</span>
<span class="t " style="left:181.3px;top:111.7px;transform:scaleX(0.8274);">Amendment&nbsp; CRC:</span>
<div class="inp ro" style="left:182px;top:128px;width:88px;height:20px;"></div>
<span class="t " style="left:184.7px;top:130.7px;transform:scaleX(0.8297);">339C</span>
<div class="chk" style="left:274px;top:111px"></div>
<span class="t " style="left:292.3px;top:109.7px;transform:scaleX(0.8563);">To the begining</span>
<div class="btn" style="left:273px;top:126px;width:77px;height:25px"></div>
<span class="t " style="left:295.3px;top:131.7px;transform:scaleX(0.8425);">Adjust:</span>
<div class="btn" style="left:418px;top:126px;width:77px;height:25px"></div>
<svg class="a" style="left:430px;top:128px" width="24" height="20" viewBox="0 0 24 20" shape-rendering="crispEdges"><path fill="#00ff00" d="M18 3h1v1h-1zM17 4h1v1h-1zM16 5h1v1h-1zM15 6h1v1h-1zM14 7h1v1h-1zM13 8h1v1h-1zM12 9h1v1h-1zM5 10h1v1h-1zM11 10h1v1h-1zM4 11h1v1h-1zM6 11h1v1h-1zM10 11h1v1h-1zM7 12h1v1h-1zM8 13h2v1h-2z"/><path fill="#008000" d="M18 4h2v1h-2zM17 5h2v1h-2zM16 6h3v1h-3zM15 7h3v1h-3zM14 8h3v1h-3zM13 9h3v1h-3zM12 10h3v1h-3zM5 11h1v1h-1zM11 11h3v1h-3zM4 12h3v1h-3zM10 12h3v1h-3zM5 13h3v1h-3zM10 13h2v1h-2zM6 14h5v1h-5zM7 15h3v1h-3zM8 16h2v1h-2z"/><path fill="#000080" d="M19 5h1v1h-1zM19 6h1v1h-1zM18 7h1v1h-1zM17 8h1v1h-1zM16 9h1v1h-1zM15 10h1v1h-1zM14 11h1v1h-1zM13 12h1v1h-1zM4 13h1v1h-1zM12 13h1v1h-1zM5 14h1v1h-1zM11 14h1v1h-1zM6 15h1v1h-1zM10 15h1v1h-1zM7 16h1v1h-1zM8 17h2v1h-2z"/></svg>
<span class="t " style="left:454.6px;top:131.0px;transform:scaleX(0.8947);"><u>S</u>ave</span>
<div class="btn" style="left:547px;top:126px;width:77px;height:25px"></div>
<svg class="a" style="left:553px;top:129px" width="24" height="20" viewBox="0 0 24 20" shape-rendering="crispEdges"><path fill="#808080" d="M3 3h2v1h-2zM6 3h13v1h-13zM4 5h1v1h-1zM3 7h2v1h-2zM6 7h1v1h-1zM8 7h1v1h-1zM10 7h3v1h-3zM14 7h2v1h-2zM18 7h1v1h-1zM4 9h1v1h-1zM3 11h2v1h-2zM6 11h1v1h-1zM8 11h1v1h-1zM10 11h1v1h-1zM12 11h2v1h-2zM15 11h4v1h-4zM4 13h1v1h-1zM3 15h2v1h-2zM5 16h1v1h-1zM9 16h1v1h-1zM13 16h1v1h-1zM17 16h1v1h-1zM5 17h1v1h-1zM9 17h1v1h-1zM13 17h1v1h-1zM17 17h1v1h-1z"/><path fill="#000" d="M5 3h1v1h-1zM5 4h1v1h-1zM5 5h1v1h-1zM5 6h1v1h-1zM5 7h1v1h-1zM5 8h1v1h-1zM5 9h1v1h-1zM5 10h1v1h-1zM5 11h1v1h-1zM5 12h1v1h-1zM5 13h1v1h-1zM5 14h1v1h-1zM5 15h14v1h-14z"/><path fill="#fff" d="M6 4h13v1h-13zM6 5h2v1h-2zM9 5h8v1h-8zM18 5h1v1h-1zM6 6h2v1h-2zM9 6h7v1h-7zM17 6h2v1h-2zM6 8h1v1h-1zM8 8h1v1h-1zM10 8h2v1h-2zM13 8h1v1h-1zM17 8h2v1h-2zM7 9h3v1h-3zM11 9h1v1h-1zM13 9h2v1h-2zM16 9h3v1h-3zM6 10h2v1h-2zM9 10h2v1h-2zM12 10h3v1h-3zM16 10h3v1h-3zM6 12h1v1h-1zM8 12h1v1h-1zM11 12h1v1h-1zM13 12h1v1h-1zM15 12h4v1h-4zM7 13h6v1h-6zM14 13h5v1h-5zM6 14h13v1h-13z"/><path fill="#00f" d="M8 5h1v1h-1zM17 5h1v1h-1zM8 6h1v1h-1zM16 6h1v1h-1zM7 7h1v1h-1zM9 7h1v1h-1zM16 7h1v1h-1zM7 8h1v1h-1zM9 8h1v1h-1zM15 8h1v1h-1zM6 9h1v1h-1zM10 9h1v1h-1zM15 10h1v1h-1zM14 11h1v1h-1zM12 12h1v1h-1zM14 12h1v1h-1zM13 13h1v1h-1z"/><path fill="#f00" d="M13 7h1v1h-1zM17 7h1v1h-1zM12 8h1v1h-1zM14 8h1v1h-1zM16 8h1v1h-1zM12 9h1v1h-1zM15 9h1v1h-1zM8 10h1v1h-1zM11 10h1v1h-1zM7 11h1v1h-1zM9 11h1v1h-1zM11 11h1v1h-1zM7 12h1v1h-1zM9 12h2v1h-2zM6 13h1v1h-1z"/><path fill="#b0b0b0" d="M7 16h1v1h-1zM11 16h1v1h-1zM15 16h1v1h-1z"/></svg>
<span class="t " style="left:576.0px;top:131.0px;transform:scaleX(0.8615);">2D <u>V</u>iew</span>
<div class="a" style="left:-1px;top:180px;width:640px;height:265px;background:#f0f0f0;border-top:1px solid #fff;border-left:1px solid #fff;border-right:1px solid #696969;box-shadow:inset -1px 0 0 #a0a0a0, inset 0 1px 0 #e3e3e3"></div>
<div class="a" style="left:0px;top:163px;width:43px;height:17px;background:#f0f0f0;border-top:1px solid #fff;border-left:1px solid #fff;border-right:1px solid #696969;box-shadow:inset -1px 0 0 #a0a0a0;border-radius:2px 2px 0 0"></div>
<span class="t " style="left:5.3px;top:164.7px;transform:scaleX(0.8634);">VRIS</span>
<div class="a" style="left:99px;top:163px;width:111px;height:17px;background:#f0f0f0;border-top:1px solid #fff;border-left:1px solid #fff;border-right:1px solid #696969;box-shadow:inset -1px 0 0 #a0a0a0;border-radius:2px 2px 0 0"></div>
<span class="t " style="left:104.3px;top:164.7px;transform:scaleX(0.8465);">Timings High Octane</span>
<div class="a" style="left:210px;top:163px;width:108px;height:17px;background:#f0f0f0;border-top:1px solid #fff;border-left:1px solid #fff;border-right:1px solid #696969;box-shadow:inset -1px 0 0 #a0a0a0;border-radius:2px 2px 0 0"></div>
<span class="t " style="left:215.3px;top:164.7px;transform:scaleX(0.8496);">Timings Low Octane</span>
<div class="a" style="left:318px;top:163px;width:58px;height:17px;background:#f0f0f0;border-top:1px solid #fff;border-left:1px solid #fff;border-right:1px solid #696969;box-shadow:inset -1px 0 0 #a0a0a0;border-radius:2px 2px 0 0"></div>
<span class="t " style="left:323.7px;top:164.7px;transform:scaleX(0.8247);">Multipliers</span>
<div class="a" style="left:376px;top:163px;width:47px;height:17px;background:#f0f0f0;border-top:1px solid #fff;border-left:1px solid #fff;border-right:1px solid #696969;box-shadow:inset -1px 0 0 #a0a0a0;border-radius:2px 2px 0 0"></div>
<span class="t " style="left:381.3px;top:164.7px;transform:scaleX(0.8180);">Limiters</span>
<div class="a" style="left:41px;top:161px;width:59px;height:21px;background:#f0f0f0;border-top:1px solid #fff;border-left:1px solid #fff;border-right:1px solid #696969;box-shadow:inset -1px 0 0 #a0a0a0;border-radius:2px 2px 0 0"></div>
<span class="t " style="left:47.9px;top:162.7px;transform:scaleX(0.8482);">Fuel Map</span>
<span class="t " style="left:8.3px;top:191.7px;transform:scaleX(0.8527);">Fuel map block(HEX)</span>
<div class="inp" style="left:210px;top:184px;width:40px;height:20px;"></div>
<span class="t " style="left:212.9px;top:186.7px;transform:scaleX(0.8701);">0386</span>
<div class="inp" style="left:10px;top:208px;width:353px;height:241px;background:#f0f0f0"></div>
<div class="a" style="left:12px;top:210px;width:332px;height:237px;background:#c8c8c8;"></div>
<svg class="a" style="left:347px;top:215px" width="11" height="7" viewBox="0 0 11 7"><path d="M1 6L5.5 1.5L10 6" fill="none" stroke="#bdbdbd" stroke-width="1.6"/></svg>
<svg class="a" style="left:347px;top:435px" width="11" height="7" viewBox="0 0 11 7"><path d="M1 1L5.5 5.5L10 1" fill="none" stroke="#bdbdbd" stroke-width="1.6"/></svg>
<div class="hx" style="left:11.4px;top:211.7px;width:332px;text-align:center">
<div><span style="display:inline-block;transform:scaleX(0.9701);transform-origin:center">20 20 20 20 20 20 20 20 20 20 20 20 24 24 20 20 20 20</span></div>
<div><span style="display:inline-block;transform:scaleX(0.9736);transform-origin:center">20 20 20 20 20 20 20 20 2B 2B 20 20 20 20 20 20 20 20</span></div>
<div><span style="display:inline-block;transform:scaleX(0.9701);transform-origin:center">20 20 20 20 32 32 20 20 20 20 20 20 20 20 20 20 20 24</span></div>
<div><span style="display:inline-block;transform:scaleX(0.9719);transform-origin:center">35 35 20 20 20 20 20 20 20 20 20 20 24 2A 37 39 20 20</span></div>
<div><span style="display:inline-block;transform:scaleX(0.9710);transform-origin:center">20 20 20 20 20 20 20 20 2A 2C 38 3C 20 20 20 20 20 20</span></div>
<div><span style="display:inline-block;transform:scaleX(0.9714);transform-origin:center">20 20 20 20 2C 30 3B 43 20 20 20 20 20 20 20 20 20 26</span></div>
<div><span style="display:inline-block;transform:scaleX(0.9761);transform-origin:center">2E 33 41 4F 36 36 37 20 20 20 20 20 20 2A 31 37 48 5B</span></div>
<div><span style="display:inline-block;transform:scaleX(0.9769);transform-origin:center">36 36 37 36 32 34 33 20 20 2E 36 3E 4E 5B 36 36 37 36</span></div>
<div><span style="display:inline-block;transform:scaleX(0.9769);transform-origin:center">32 34 33 33 31 34 3B 3E 4E 5B 36 36 37 36 32 34 33 33</span></div>
<div><span style="display:inline-block;transform:scaleX(0.9790);transform-origin:center">31 34 3B 3E 4E 5B 36 36 37 36 32 34 33 33 31 34 3B</span></div>
<div><span style="display:inline-block;transform:scaleX(0.9943);transform-origin:center">3E 4E 5B</span></div>
</div>
<div class="btn" style="left:418px;top:208px;width:77px;height:25px"></div>
<span class="t " style="left:444.9px;top:213.7px;transform:scaleX(0.8917);">Load</span>
<div class="btn" style="left:418px;top:240px;width:77px;height:25px"></div>
<span class="t " style="left:443.8px;top:245.7px;transform:scaleX(0.8947);">Save</span>
<div class="btn" style="left:546px;top:208px;width:77px;height:25px"></div>
<svg class="a" style="left:551px;top:210px" width="24" height="20" viewBox="0 0 24 20" shape-rendering="crispEdges"><path fill="#000" d="M4 3h15v1h-15zM4 4h1v1h-1zM18 4h1v1h-1zM4 5h1v1h-1zM18 5h1v1h-1zM4 6h1v1h-1zM7 6h9v1h-9zM18 6h1v1h-1zM4 7h1v1h-1zM7 7h1v1h-1zM15 7h1v1h-1zM18 7h1v1h-1zM4 8h1v1h-1zM7 8h1v1h-1zM15 8h1v1h-1zM18 8h1v1h-1zM4 9h1v1h-1zM7 9h1v1h-1zM15 9h1v1h-1zM18 9h1v1h-1zM4 10h1v1h-1zM7 10h1v1h-1zM15 10h1v1h-1zM18 10h1v1h-1zM4 11h1v1h-1zM7 11h1v1h-1zM15 11h1v1h-1zM18 11h1v1h-1zM4 12h1v1h-1zM7 12h9v1h-9zM18 12h1v1h-1zM4 13h1v1h-1zM18 13h1v1h-1zM4 14h1v1h-1zM18 14h1v1h-1zM4 15h15v1h-15zM9 16h1v1h-1zM13 16h1v1h-1zM7 17h1v1h-1zM15 17h1v1h-1zM6 18h11v1h-11z"/><path fill="#fff" d="M5 4h13v1h-13zM5 5h1v1h-1zM17 5h1v1h-1zM5 6h1v1h-1zM16 6h2v1h-2zM5 7h1v1h-1zM16 7h2v1h-2zM5 8h1v1h-1zM16 8h2v1h-2zM5 9h1v1h-1zM16 9h2v1h-2zM5 10h1v1h-1zM16 10h2v1h-2zM5 11h1v1h-1zM16 11h2v1h-2zM5 12h1v1h-1zM16 12h2v1h-2zM5 13h1v1h-1zM7 13h9v1h-9zM17 13h1v1h-1zM5 14h10v1h-10zM16 14h2v1h-2z"/><path fill="#808080" d="M6 5h11v1h-11zM6 6h1v1h-1zM6 7h1v1h-1zM6 8h1v1h-1zM6 9h1v1h-1zM6 10h1v1h-1zM6 11h1v1h-1zM6 12h1v1h-1zM6 13h1v1h-1zM16 13h1v1h-1zM10 16h3v1h-3zM8 17h7v1h-7z"/><path fill="#0f0" d="M8 7h7v1h-7zM8 8h1v1h-1zM11 8h1v1h-1zM14 8h1v1h-1zM8 9h1v1h-1zM11 9h1v1h-1zM14 9h1v1h-1zM8 10h1v1h-1zM14 10h1v1h-1zM8 11h7v1h-7z"/><path fill="#f00" d="M9 8h2v1h-2zM12 8h2v1h-2zM9 9h2v1h-2zM12 9h2v1h-2zM15 14h1v1h-1z"/><path fill="#f0f" d="M9 10h5v1h-5z"/></svg>
<span class="t " style="left:575.0px;top:213.7px;transform:scaleX(0.8615);">3D View</span>
<div class="def" style="left:546px;top:240px;width:77px;height:25px"></div>
<div class="btn" style="left:547px;top:241px;width:75px;height:23px"></div>
<svg class="a" style="left:562px;top:242px" width="24" height="20" viewBox="0 0 24 20" shape-rendering="crispEdges"><path fill="#000" d="M7 3h1v1h-1zM10 3h7v1h-7zM6 4h1v1h-1zM8 4h1v1h-1zM10 4h1v1h-1zM16 4h2v1h-2zM7 5h1v1h-1zM9 5h2v1h-2zM16 5h1v1h-1zM18 5h1v1h-1zM8 6h1v1h-1zM10 6h1v1h-1zM13 6h2v1h-2zM16 6h1v1h-1zM19 6h1v1h-1zM9 7h1v1h-1zM11 7h1v1h-1zM16 7h4v1h-4zM7 8h4v1h-4zM12 8h1v1h-1zM19 8h1v1h-1zM4 9h3v1h-3zM10 9h2v1h-2zM13 9h1v1h-1zM16 9h2v1h-2zM19 9h1v1h-1zM5 10h1v1h-1zM9 10h6v1h-6zM19 10h1v1h-1zM5 11h1v1h-1zM15 11h1v1h-1zM19 11h1v1h-1zM5 12h1v1h-1zM10 12h5v1h-5zM16 12h1v1h-1zM19 12h1v1h-1zM5 13h1v1h-1zM13 13h1v1h-1zM15 13h2v1h-2zM19 13h1v1h-1zM5 14h1v1h-1zM10 14h3v1h-3zM17 14h1v1h-1zM19 14h1v1h-1zM5 15h1v1h-1zM19 15h1v1h-1zM4 16h2v1h-2zM7 16h5v1h-5zM14 16h1v1h-1zM16 16h2v1h-2zM19 16h1v1h-1zM10 17h1v1h-1zM19 17h1v1h-1zM10 18h10v1h-10z"/><path fill="#f00" d="M7 4h1v1h-1z"/><path fill="#fff" d="M11 4h5v1h-5zM11 5h5v1h-5zM17 5h1v1h-1zM11 6h2v1h-2zM15 6h1v1h-1zM17 6h2v1h-2zM12 7h4v1h-4zM13 8h6v1h-6zM14 9h2v1h-2zM18 9h1v1h-1zM7 10h1v1h-1zM15 10h4v1h-4zM6 11h1v1h-1zM8 11h1v1h-1zM10 11h1v1h-1zM12 11h1v1h-1zM14 11h1v1h-1zM16 11h3v1h-3zM7 12h1v1h-1zM9 12h1v1h-1zM17 12h2v1h-2zM6 13h1v1h-1zM8 13h1v1h-1zM10 13h1v1h-1zM12 13h1v1h-1zM14 13h1v1h-1zM17 13h2v1h-2zM7 14h1v1h-1zM9 14h1v1h-1zM13 14h4v1h-4zM18 14h1v1h-1zM6 15h1v1h-1zM8 15h1v1h-1zM10 15h1v1h-1zM12 15h7v1h-7zM12 16h2v1h-2zM15 16h1v1h-1zM18 16h1v1h-1zM11 17h8v1h-8z"/><path fill="#ff0" d="M8 5h1v1h-1zM9 6h1v1h-1zM10 7h1v1h-1zM11 8h1v1h-1zM7 9h3v1h-3zM12 9h1v1h-1zM6 10h1v1h-1zM8 10h1v1h-1zM7 11h1v1h-1zM9 11h1v1h-1zM11 11h1v1h-1zM13 11h1v1h-1zM6 12h1v1h-1zM8 12h1v1h-1zM15 12h1v1h-1zM7 13h1v1h-1zM9 13h1v1h-1zM11 13h1v1h-1zM6 14h1v1h-1zM8 14h1v1h-1zM7 15h1v1h-1zM9 15h1v1h-1zM11 15h1v1h-1z"/><path fill="#0ff" d="M4 10h1v1h-1zM4 11h1v1h-1zM4 12h1v1h-1zM4 13h1v1h-1zM4 14h1v1h-1zM4 15h1v1h-1z"/></svg>
<span class="t " style="left:586.2px;top:245.7px;transform:scaleX(0.8307);">Edit</span>
</div></div>
<div class="a" style="left:0;top:461px;width:640px;height:3px;background:#fff"></div>
<div class="w" style="left:639px;top:0px;width:710px;height:460px;background:#f0f0f0"><div class="a" style="left:-639px;top:0px">
<div class="a" style="left:639px;top:0px;width:710px;height:5px;background:#f2f5fa;"></div>
<div class="a" style="left:639px;top:0px;width:8px;height:460px;background:linear-gradient(90deg,#b8b8b8 0,#cfd0d3 2px,#e4e6ea 5px,#eef0f4 8px);"></div>
<div class="a" style="left:647px;top:5px;width:702px;height:22px;background:linear-gradient(90deg,#c3d0e1,#d3dfec);"></div>
<div class="a" style="left:647px;top:27px;width:702px;height:1px;background:#fff;"></div>
<svg class="a" style="left:650px;top:7px" width="18" height="18" viewBox="0 0 18 18" shape-rendering="crispEdges"><path fill="#000" d="M5 1h2v1h-2zM4 2h4v1h-4zM3 3h6v1h-6zM2 4h2v1h-2zM7 4h3v1h-3zM2 5h2v1h-2zM7 5h4v1h-4zM1 6h1v1h-1zM3 6h4v1h-4zM8 6h4v1h-4zM2 7h1v1h-1zM4 7h3v1h-3zM9 7h4v1h-4zM2 8h2v1h-2zM5 8h3v1h-3zM10 8h4v1h-4zM1 9h1v1h-1zM4 9h1v1h-1zM6 9h9v1h-9zM4 10h2v1h-2zM7 10h4v1h-4zM12 10h4v1h-4zM3 11h1v1h-1zM6 11h1v1h-1zM8 11h6v1h-6zM15 11h1v1h-1zM6 12h2v1h-2zM9 12h4v1h-4zM14 12h1v1h-1zM5 13h1v1h-1zM8 13h1v1h-1zM10 13h2v1h-2zM13 13h1v1h-1zM8 14h2v1h-2zM12 14h1v1h-1zM14 14h1v1h-1zM7 15h1v1h-1zM10 15h2v1h-2zM13 15h1v1h-1zM10 16h1v1h-1z"/><path fill="#ff0" d="M7 1h2v1h-2zM8 2h1v1h-1zM9 3h2v1h-2zM10 4h1v1h-1zM11 5h2v1h-2zM12 6h1v1h-1zM1 7h1v1h-1zM13 7h2v1h-2zM1 8h1v1h-1zM14 8h1v1h-1zM3 9h1v1h-1zM15 9h2v1h-2zM3 10h1v1h-1zM16 10h1v1h-1zM5 11h1v1h-1zM5 12h1v1h-1zM7 13h1v1h-1zM7 14h1v1h-1zM9 15h1v1h-1zM9 16h1v1h-1z"/><path fill="#808080" d="M4 4h3v1h-3zM4 5h3v1h-3zM7 6h1v1h-1zM7 7h2v1h-2zM8 8h2v1h-2zM11 10h1v1h-1zM14 11h1v1h-1zM13 12h1v1h-1zM15 12h1v1h-1zM12 13h1v1h-1zM14 13h1v1h-1zM13 14h1v1h-1zM12 15h1v1h-1zM11 16h2v1h-2z"/><path fill="#a0a0a0" d="M2 6h1v1h-1zM3 7h1v1h-1zM4 8h1v1h-1zM5 9h1v1h-1zM6 10h1v1h-1zM7 11h1v1h-1zM8 12h1v1h-1zM9 13h1v1h-1zM10 14h2v1h-2z"/></svg>
<span class="seg" style="left:671.0px;top:9.3px;color:#000;font-size:12px;transform:scaleX(0.9546);">Editing - Fuel map: 'KL01C_079753-1603.bin'</span>
<div class="a" style="left:647px;top:52px;width:702px;height:1px;background:#a0a0a0;"></div>
<div class="a" style="left:647px;top:53px;width:702px;height:1px;background:#fff;"></div>
<div class="def" style="left:651px;top:29px;width:85px;height:24px;background:#696969"></div>
<div class="btn" style="left:652px;top:30px;width:83px;height:22px"></div>
<svg class="a" style="left:667px;top:30px" width="24" height="20" viewBox="0 0 24 20" shape-rendering="crispEdges"><path fill="#a0a0a0" d="M18 3h1v1h-1zM17 4h1v1h-1zM19 4h1v1h-1zM16 5h1v1h-1zM19 5h1v1h-1zM15 6h1v1h-1zM19 6h1v1h-1zM14 7h1v1h-1zM18 7h1v1h-1zM13 8h1v1h-1zM17 8h1v1h-1zM12 9h1v1h-1zM16 9h1v1h-1zM5 10h1v1h-1zM11 10h1v1h-1zM15 10h1v1h-1zM4 11h1v1h-1zM6 11h1v1h-1zM10 11h1v1h-1zM14 11h1v1h-1zM4 12h1v1h-1zM7 12h1v1h-1zM10 12h1v1h-1zM13 12h1v1h-1zM4 13h1v1h-1zM8 13h2v1h-2zM12 13h1v1h-1zM5 14h1v1h-1zM11 14h1v1h-1zM6 15h1v1h-1zM10 15h1v1h-1zM7 16h1v1h-1zM9 16h1v1h-1zM8 17h2v1h-2z"/><path fill="#f0f0f0" d="M18 4h1v1h-1zM17 5h2v1h-2zM16 6h3v1h-3zM15 7h3v1h-3zM14 8h3v1h-3zM13 9h3v1h-3zM12 10h3v1h-3zM5 11h1v1h-1zM11 11h3v1h-3zM5 12h2v1h-2zM11 12h2v1h-2zM5 13h3v1h-3zM10 13h2v1h-2zM6 14h5v1h-5zM7 15h3v1h-3zM8 16h1v1h-1z"/><path fill="#fff" d="M20 5h1v1h-1zM20 6h1v1h-1zM20 7h1v1h-1zM19 8h1v1h-1zM18 9h1v1h-1zM17 10h1v1h-1zM16 11h1v1h-1zM15 12h1v1h-1zM14 13h1v1h-1zM13 14h1v1h-1zM12 15h1v1h-1zM11 16h1v1h-1zM10 17h1v1h-1zM9 18h2v1h-2z"/></svg>
<span class="t dis" style="left:692.3px;top:35.7px;transform:scaleX(0.8663);color:#fff"><u style="border-color:#fff">A</u>pply</span>
<span class="t dis" style="left:691.3px;top:34.7px;transform:scaleX(0.8663);"><u style="border-color:#a0a0a0">A</u>pply</span>
<span class="t " style="left:742.3px;top:33.7px;transform:scaleX(0.8575);">Value:</span>
<div class="inp" style="left:797px;top:30px;width:26px;height:20px;"></div>
<span class="t " style="left:799.9px;top:32.7px;transform:scaleX(0.8845);">32</span>
<i class="tsp" style="left:824px;top:30px"></i>
<span class="t " style="left:846.6px;top:33.7px;transform:scaleX(0.8790);">inc:</span>
<i class="tsp" style="left:864px;top:30px"></i>
<span class="t " style="left:895.8px;top:33.7px;">X:</span>
<div class="inp" style="left:907px;top:30px;width:24px;height:20px;"></div>
<span class="t " style="left:909.9px;top:32.7px;transform:scaleX(0.8629);">14</span>
<i class="tsp n" style="left:932px;top:30px"></i>
<span class="t " style="left:951.9px;top:33.7px;">Y:</span>
<div class="inp" style="left:963px;top:30px;width:24px;height:20px;"></div>
<span class="t " style="left:966.0px;top:32.7px;transform:scaleX(0.8629);">13</span>
<i class="tsp n" style="left:988px;top:30px"></i>
<div class="chk" style="left:1015px;top:35px"></div>
<span class="t " style="left:1032.8px;top:33.7px;transform:scaleX(0.8905);">Hex</span>
<span class="t " style="left:1076.7px;top:33.7px;transform:scaleX(0.8727);">Seek:</span>
<div class="inp" style="left:1110px;top:30px;width:79px;height:20px;"></div>
<div class="btn" style="left:1192px;top:29px;width:62px;height:24px"></div>
<span class="t " style="left:1212.7px;top:35.0px;transform:scaleX(0.8632);">Find</span>
<div class="btn" style="left:1255px;top:29px;width:73px;height:24px"></div>
<span class="t dis" style="left:1269.6px;top:35.0px;transform:scaleX(0.8615);">Find next</span>
<div class="a" style="left:647px;top:54px;width:1px;height:23px;background:#fff;"></div>
<div class="a" style="left:782px;top:54px;width:1px;height:23px;background:#a0a0a0;"></div>
<div class="a" style="left:783px;top:54px;width:1px;height:23px;background:#fff;"></div>
<div class="a" style="left:647px;top:77px;width:702px;height:1px;background:#a0a0a0;"></div>
<span class="t " style="left:675.8px;top:57.7px;transform:scaleX(0.8326);">Start address:</span>
<div class="inp" style="left:744px;top:56px;width:36px;height:19px;"></div>
<span class="t " style="left:746.3px;top:57.7px;transform:scaleX(0.8832);">03C0</span>
<div class="a" style="left:790px;top:57px;width:570px;height:8px;background:#fff;border-top:1px solid #a0a0a0;border-left:1px solid #a0a0a0;border-bottom:1px solid #e3e3e3;box-shadow:inset 1px 1px 0 #696969"></div>
<svg class="a" style="left:811px;top:56px" width="7" height="15" viewBox="0 0 7 15"><path d="M0.5 0.5H5.5V10.5L3 13.5L0.5 10.5Z" fill="#f0f0f0" stroke="#fff" stroke-width="1"/><path d="M6 0V11L3 14.2" fill="none" stroke="#696969" stroke-width="1.2"/><path d="M5 1V10.5L3 13" fill="none" stroke="#a0a0a0" stroke-width="1"/></svg>
<div class="a" style="left:793px;top:71px;width:560px;height:3px;background:#000;"></div>
<div class="a" style="left:647px;top:78px;width:710px;height:372px;background:#fff;border-top:1px solid #a0a0a0;border-left:1px solid #a0a0a0;border-bottom:1px solid #fff;box-shadow:inset 1px 1px 0 #696969"></div>
<div class="hc" style="left:649px;top:80px;width:45px;height:25px"></div>
<div class="hc" style="left:694px;top:80px;width:45px;height:25px;line-height:23px">00</div>
<div class="hc" style="left:739px;top:80px;width:45px;height:25px;line-height:23px">01</div>
<div class="hc" style="left:784px;top:80px;width:45px;height:25px;line-height:23px">02</div>
<div class="hc" style="left:829px;top:80px;width:45px;height:25px;line-height:23px">03</div>
<div class="hc" style="left:874px;top:80px;width:45px;height:25px;line-height:23px">04</div>
<div class="hc" style="left:919px;top:80px;width:45px;height:25px;line-height:23px">05</div>
<div class="hc" style="left:964px;top:80px;width:45px;height:25px;line-height:23px">06</div>
<div class="hc" style="left:1009px;top:80px;width:45px;height:25px;line-height:23px">07</div>
<div class="hc" style="left:1054px;top:80px;width:45px;height:25px;line-height:23px">08</div>
<div class="hc" style="left:1099px;top:80px;width:45px;height:25px;line-height:23px">09</div>
<div class="hc" style="left:1144px;top:80px;width:45px;height:25px;line-height:23px">0A</div>
<div class="hc" style="left:1189px;top:80px;width:45px;height:25px;line-height:23px">0B</div>
<div class="hc" style="left:1234px;top:80px;width:45px;height:25px;line-height:23px">0C</div>
<div class="hc" style="left:1279px;top:80px;width:45px;height:25px;line-height:23px">0D</div>
<div class="hc" style="left:649px;top:105px;width:45px;height:25px;line-height:23px">03C0</div>
<div class="c v32" style="left:694px;top:105px">32<i></i><b class="foc"></b></div>
<div class="c v32" style="left:739px;top:105px">32<i></i></div>
<div class="c v32" style="left:784px;top:105px">32<i></i></div>
<div class="c v32" style="left:829px;top:105px">32<i></i></div>
<div class="c v32" style="left:874px;top:105px">32<i></i></div>
<div class="c v32" style="left:919px;top:105px">32<i></i></div>
<div class="c v32" style="left:964px;top:105px">32<i></i></div>
<div class="c v32" style="left:1009px;top:105px">32<i></i></div>
<div class="c v32" style="left:1054px;top:105px">32<i></i></div>
<div class="c v32" style="left:1099px;top:105px">32<i></i></div>
<div class="c v32" style="left:1144px;top:105px">32<i></i></div>
<div class="c v32" style="left:1189px;top:105px">32<i></i></div>
<div class="c v36" style="left:1234px;top:105px">36<i></i></div>
<div class="c v36" style="left:1279px;top:105px">36<i></i></div>
<div class="hc" style="left:649px;top:130px;width:45px;height:25px;line-height:23px">03CE</div>
<div class="c v32" style="left:694px;top:130px">32<i></i></div>
<div class="c v32" style="left:739px;top:130px">32<i></i></div>
<div class="c v32" style="left:784px;top:130px">32<i></i></div>
<div class="c v32" style="left:829px;top:130px">32<i></i></div>
<div class="c v32" style="left:874px;top:130px">32<i></i></div>
<div class="c v32" style="left:919px;top:130px">32<i></i></div>
<div class="c v32" style="left:964px;top:130px">32<i></i></div>
<div class="c v32" style="left:1009px;top:130px">32<i></i></div>
<div class="c v32" style="left:1054px;top:130px">32<i></i></div>
<div class="c v32" style="left:1099px;top:130px">32<i></i></div>
<div class="c v32" style="left:1144px;top:130px">32<i></i></div>
<div class="c v32" style="left:1189px;top:130px">32<i></i></div>
<div class="c v43" style="left:1234px;top:130px">43<i></i></div>
<div class="c v43" style="left:1279px;top:130px">43<i></i></div>
<div class="hc" style="left:649px;top:155px;width:45px;height:25px;line-height:23px">03DC</div>
<div class="c v32" style="left:694px;top:155px">32<i></i></div>
<div class="c v32" style="left:739px;top:155px">32<i></i></div>
<div class="c v32" style="left:784px;top:155px">32<i></i></div>
<div class="c v32" style="left:829px;top:155px">32<i></i></div>
<div class="c v32" style="left:874px;top:155px">32<i></i></div>
<div class="c v32" style="left:919px;top:155px">32<i></i></div>
<div class="c v32" style="left:964px;top:155px">32<i></i></div>
<div class="c v32" style="left:1009px;top:155px">32<i></i></div>
<div class="c v32" style="left:1054px;top:155px">32<i></i></div>
<div class="c v32" style="left:1099px;top:155px">32<i></i></div>
<div class="c v32" style="left:1144px;top:155px">32<i></i></div>
<div class="c v32" style="left:1189px;top:155px">32<i></i></div>
<div class="c v50" style="left:1234px;top:155px">50<i></i></div>
<div class="c v50" style="left:1279px;top:155px">50<i></i></div>
<div class="hc" style="left:649px;top:180px;width:45px;height:25px;line-height:23px">03EA</div>
<div class="c v32" style="left:694px;top:180px">32<i></i></div>
<div class="c v32" style="left:739px;top:180px">32<i></i></div>
<div class="c v32" style="left:784px;top:180px">32<i></i></div>
<div class="c v32" style="left:829px;top:180px">32<i></i></div>
<div class="c v32" style="left:874px;top:180px">32<i></i></div>
<div class="c v32" style="left:919px;top:180px">32<i></i></div>
<div class="c v32" style="left:964px;top:180px">32<i></i></div>
<div class="c v32" style="left:1009px;top:180px">32<i></i></div>
<div class="c v32" style="left:1054px;top:180px">32<i></i></div>
<div class="c v32" style="left:1099px;top:180px">32<i></i></div>
<div class="c v32" style="left:1144px;top:180px">32<i></i></div>
<div class="c v36" style="left:1189px;top:180px">36<i></i></div>
<div class="c v53" style="left:1234px;top:180px">53<i></i></div>
<div class="c v53" style="left:1279px;top:180px">53<i></i></div>
<div class="hc" style="left:649px;top:205px;width:45px;height:25px;line-height:23px">03F8</div>
<div class="c v32" style="left:694px;top:205px">32<i></i></div>
<div class="c v32" style="left:739px;top:205px">32<i></i></div>
<div class="c v32" style="left:784px;top:205px">32<i></i></div>
<div class="c v32" style="left:829px;top:205px">32<i></i></div>
<div class="c v32" style="left:874px;top:205px">32<i></i></div>
<div class="c v32" style="left:919px;top:205px">32<i></i></div>
<div class="c v32" style="left:964px;top:205px">32<i></i></div>
<div class="c v32" style="left:1009px;top:205px">32<i></i></div>
<div class="c v32" style="left:1054px;top:205px">32<i></i></div>
<div class="c v32" style="left:1099px;top:205px">32<i></i></div>
<div class="c v36" style="left:1144px;top:205px">36<i></i></div>
<div class="c v42" style="left:1189px;top:205px">42<i></i></div>
<div class="c v55" style="left:1234px;top:205px">55<i></i></div>
<div class="c v57" style="left:1279px;top:205px">57<i></i></div>
<div class="hc" style="left:649px;top:230px;width:45px;height:25px;line-height:23px">0406</div>
<div class="c v32" style="left:694px;top:230px">32<i></i></div>
<div class="c v32" style="left:739px;top:230px">32<i></i></div>
<div class="c v32" style="left:784px;top:230px">32<i></i></div>
<div class="c v32" style="left:829px;top:230px">32<i></i></div>
<div class="c v32" style="left:874px;top:230px">32<i></i></div>
<div class="c v32" style="left:919px;top:230px">32<i></i></div>
<div class="c v32" style="left:964px;top:230px">32<i></i></div>
<div class="c v32" style="left:1009px;top:230px">32<i></i></div>
<div class="c v32" style="left:1054px;top:230px">32<i></i></div>
<div class="c v32" style="left:1099px;top:230px">32<i></i></div>
<div class="c v42" style="left:1144px;top:230px">42<i></i></div>
<div class="c v44" style="left:1189px;top:230px">44<i></i></div>
<div class="c v56" style="left:1234px;top:230px">56<i></i></div>
<div class="c v60" style="left:1279px;top:230px">60<i></i></div>
<div class="hc" style="left:649px;top:255px;width:45px;height:25px;line-height:23px">0414</div>
<div class="c v32" style="left:694px;top:255px">32<i></i></div>
<div class="c v32" style="left:739px;top:255px">32<i></i></div>
<div class="c v32" style="left:784px;top:255px">32<i></i></div>
<div class="c v32" style="left:829px;top:255px">32<i></i></div>
<div class="c v32" style="left:874px;top:255px">32<i></i></div>
<div class="c v32" style="left:919px;top:255px">32<i></i></div>
<div class="c v32" style="left:964px;top:255px">32<i></i></div>
<div class="c v32" style="left:1009px;top:255px">32<i></i></div>
<div class="c v32" style="left:1054px;top:255px">32<i></i></div>
<div class="c v32" style="left:1099px;top:255px">32<i></i></div>
<div class="c v44" style="left:1144px;top:255px">44<i></i></div>
<div class="c v48" style="left:1189px;top:255px">48<i></i></div>
<div class="c v59" style="left:1234px;top:255px">59<i></i></div>
<div class="c v67" style="left:1279px;top:255px">67<i></i></div>
<div class="hc" style="left:649px;top:280px;width:45px;height:25px;line-height:23px">0422</div>
<div class="c v32" style="left:694px;top:280px">32<i></i></div>
<div class="c v32" style="left:739px;top:280px">32<i></i></div>
<div class="c v32" style="left:784px;top:280px">32<i></i></div>
<div class="c v32" style="left:829px;top:280px">32<i></i></div>
<div class="c v32" style="left:874px;top:280px">32<i></i></div>
<div class="c v32" style="left:919px;top:280px">32<i></i></div>
<div class="c v32" style="left:964px;top:280px">32<i></i></div>
<div class="c v32" style="left:1009px;top:280px">32<i></i></div>
<div class="c v32" style="left:1054px;top:280px">32<i></i></div>
<div class="c v38" style="left:1099px;top:280px">38<i></i></div>
<div class="c v46" style="left:1144px;top:280px">46<i></i></div>
<div class="c v51" style="left:1189px;top:280px">51<i></i></div>
<div class="c v65" style="left:1234px;top:280px">65<i></i></div>
<div class="c v79" style="left:1279px;top:280px">79<i></i></div>
<div class="hc" style="left:649px;top:305px;width:45px;height:25px;line-height:23px">0430</div>
<div class="c v54" style="left:694px;top:305px">54<i></i></div>
<div class="c v54" style="left:739px;top:305px">54<i></i></div>
<div class="c v55" style="left:784px;top:305px">55<i></i></div>
<div class="c v32" style="left:829px;top:305px">32<i></i></div>
<div class="c v32" style="left:874px;top:305px">32<i></i></div>
<div class="c v32" style="left:919px;top:305px">32<i></i></div>
<div class="c v32" style="left:964px;top:305px">32<i></i></div>
<div class="c v32" style="left:1009px;top:305px">32<i></i></div>
<div class="c v32" style="left:1054px;top:305px">32<i></i></div>
<div class="c v42" style="left:1099px;top:305px">42<i></i></div>
<div class="c v49" style="left:1144px;top:305px">49<i></i></div>
<div class="c v55" style="left:1189px;top:305px">55<i></i></div>
<div class="c v72" style="left:1234px;top:305px">72<i></i></div>
<div class="c v91" style="left:1279px;top:305px">91<i></i></div>
<div class="hc" style="left:649px;top:330px;width:45px;height:25px;line-height:23px">043E</div>
<div class="c v54" style="left:694px;top:330px">54<i></i></div>
<div class="c v54" style="left:739px;top:330px">54<i></i></div>
<div class="c v55" style="left:784px;top:330px">55<i></i></div>
<div class="c v54" style="left:829px;top:330px">54<i></i></div>
<div class="c v50" style="left:874px;top:330px">50<i></i></div>
<div class="c v52" style="left:919px;top:330px">52<i></i></div>
<div class="c v51" style="left:964px;top:330px">51<i></i></div>
<div class="c v32" style="left:1009px;top:330px">32<i></i></div>
<div class="c v32" style="left:1054px;top:330px">32<i></i></div>
<div class="c v46" style="left:1099px;top:330px">46<i></i></div>
<div class="c v54" style="left:1144px;top:330px">54<i></i></div>
<div class="c v62" style="left:1189px;top:330px">62<i></i></div>
<div class="c v78" style="left:1234px;top:330px">78<i></i></div>
<div class="c v91" style="left:1279px;top:330px">91<i></i></div>
<div class="hc" style="left:649px;top:355px;width:45px;height:25px;line-height:23px">044C</div>
<div class="c v54" style="left:694px;top:355px">54<i></i></div>
<div class="c v54" style="left:739px;top:355px">54<i></i></div>
<div class="c v55" style="left:784px;top:355px">55<i></i></div>
<div class="c v54" style="left:829px;top:355px">54<i></i></div>
<div class="c v50" style="left:874px;top:355px">50<i></i></div>
<div class="c v52" style="left:919px;top:355px">52<i></i></div>
<div class="c v51" style="left:964px;top:355px">51<i></i></div>
<div class="c v51" style="left:1009px;top:355px">51<i></i></div>
<div class="c v49" style="left:1054px;top:355px">49<i></i></div>
<div class="c v52" style="left:1099px;top:355px">52<i></i></div>
<div class="c v59" style="left:1144px;top:355px">59<i></i></div>
<div class="c v62" style="left:1189px;top:355px">62<i></i></div>
<div class="c v78" style="left:1234px;top:355px">78<i></i></div>
<div class="c v91" style="left:1279px;top:355px">91<i></i></div>
<div class="hc" style="left:649px;top:380px;width:45px;height:25px;line-height:23px">045A</div>
<div class="c v54" style="left:694px;top:380px">54<i></i></div>
<div class="c v54" style="left:739px;top:380px">54<i></i></div>
<div class="c v55" style="left:784px;top:380px">55<i></i></div>
<div class="c v54" style="left:829px;top:380px">54<i></i></div>
<div class="c v50" style="left:874px;top:380px">50<i></i></div>
<div class="c v52" style="left:919px;top:380px">52<i></i></div>
<div class="c v51" style="left:964px;top:380px">51<i></i></div>
<div class="c v51" style="left:1009px;top:380px">51<i></i></div>
<div class="c v49" style="left:1054px;top:380px">49<i></i></div>
<div class="c v52" style="left:1099px;top:380px">52<i></i></div>
<div class="c v59" style="left:1144px;top:380px">59<i></i></div>
<div class="c v62" style="left:1189px;top:380px">62<i></i></div>
<div class="c v78" style="left:1234px;top:380px">78<i></i></div>
<div class="c v91" style="left:1279px;top:380px">91<i></i></div>
<div class="hc" style="left:649px;top:405px;width:45px;height:25px;line-height:23px">0468</div>
<div class="c v54" style="left:694px;top:405px">54<i></i></div>
<div class="c v54" style="left:739px;top:405px">54<i></i></div>
<div class="c v55" style="left:784px;top:405px">55<i></i></div>
<div class="c v54" style="left:829px;top:405px">54<i></i></div>
<div class="c v50" style="left:874px;top:405px">50<i></i></div>
<div class="c v52" style="left:919px;top:405px">52<i></i></div>
<div class="c v51" style="left:964px;top:405px">51<i></i></div>
<div class="c v51" style="left:1009px;top:405px">51<i></i></div>
<div class="c v49" style="left:1054px;top:405px">49<i></i></div>
<div class="c v52" style="left:1099px;top:405px">52<i></i></div>
<div class="c v59" style="left:1144px;top:405px">59<i></i></div>
<div class="c v62" style="left:1189px;top:405px">62<i></i></div>
<div class="c v78" style="left:1234px;top:405px">78<i></i></div>
<div class="c v91" style="left:1279px;top:405px">91<i></i></div>
<div class="a" style="left:639px;top:451px;width:710px;height:7px;background:linear-gradient(#fdfdfe,#e6e9ef);"></div>
<div class="a" style="left:639px;top:458px;width:710px;height:2px;background:linear-gradient(#9a9a9a,#5a5a5a);"></div>
</div></div>
<div class="w" style="left:639px;top:460px;width:710px;height:441px;background:#f0f0f0"><div class="a" style="left:-639px;top:3px">
<div class="a" style="left:639px;top:-3px;width:710px;height:441px;background:#fff;"></div>
<div class="a" style="left:641px;top:-1px;width:708px;height:441px;background:#b4b4b4;"></div>
<div class="a" style="left:646px;top:4px;width:703px;height:441px;background:#e8e8e8;"></div>
<div class="a" style="left:647px;top:5px;width:702px;height:441px;background:#f0f0f0;"></div>
<div class="a" style="left:647px;top:5px;width:702px;height:22px;background:linear-gradient(90deg,#9db6d6,#b2cae6);"></div>
<div class="a" style="left:647px;top:27px;width:702px;height:1px;background:#fff;"></div>
<svg class="a" style="left:650px;top:7px" width="18" height="18" viewBox="0 0 18 18" shape-rendering="crispEdges"><path fill="#000" d="M5 1h2v1h-2zM4 2h4v1h-4zM3 3h6v1h-6zM2 4h2v1h-2zM7 4h3v1h-3zM2 5h2v1h-2zM7 5h4v1h-4zM1 6h1v1h-1zM3 6h4v1h-4zM8 6h4v1h-4zM2 7h1v1h-1zM4 7h3v1h-3zM9 7h4v1h-4zM2 8h2v1h-2zM5 8h3v1h-3zM10 8h4v1h-4zM1 9h1v1h-1zM4 9h1v1h-1zM6 9h9v1h-9zM4 10h2v1h-2zM7 10h4v1h-4zM12 10h4v1h-4zM3 11h1v1h-1zM6 11h1v1h-1zM8 11h6v1h-6zM15 11h1v1h-1zM6 12h2v1h-2zM9 12h4v1h-4zM14 12h1v1h-1zM5 13h1v1h-1zM8 13h1v1h-1zM10 13h2v1h-2zM13 13h1v1h-1zM8 14h2v1h-2zM12 14h1v1h-1zM14 14h1v1h-1zM7 15h1v1h-1zM10 15h2v1h-2zM13 15h1v1h-1zM10 16h1v1h-1z"/><path fill="#ff0" d="M7 1h2v1h-2zM8 2h1v1h-1zM9 3h2v1h-2zM10 4h1v1h-1zM11 5h2v1h-2zM12 6h1v1h-1zM1 7h1v1h-1zM13 7h2v1h-2zM1 8h1v1h-1zM14 8h1v1h-1zM3 9h1v1h-1zM15 9h2v1h-2zM3 10h1v1h-1zM16 10h1v1h-1zM5 11h1v1h-1zM5 12h1v1h-1zM7 13h1v1h-1zM7 14h1v1h-1zM9 15h1v1h-1zM9 16h1v1h-1z"/><path fill="#808080" d="M4 4h3v1h-3zM4 5h3v1h-3zM7 6h1v1h-1zM7 7h2v1h-2zM8 8h2v1h-2zM11 10h1v1h-1zM14 11h1v1h-1zM13 12h1v1h-1zM15 12h1v1h-1zM12 13h1v1h-1zM14 13h1v1h-1zM13 14h1v1h-1zM12 15h1v1h-1zM11 16h2v1h-2z"/><path fill="#a0a0a0" d="M2 6h1v1h-1zM3 7h1v1h-1zM4 8h1v1h-1zM5 9h1v1h-1zM6 10h1v1h-1zM7 11h1v1h-1zM8 12h1v1h-1zM9 13h1v1h-1zM10 14h2v1h-2z"/></svg>
<span class="seg" style="left:671.0px;top:9.3px;color:#000;font-size:12px;transform:scaleX(0.9872);">Editing - Fuel map: 'KF11-KL-only-vris.BIN'</span>
<div class="a" style="left:647px;top:52px;width:702px;height:1px;background:#a0a0a0;"></div>
<div class="a" style="left:647px;top:53px;width:702px;height:1px;background:#fff;"></div>
<div class="def" style="left:651px;top:29px;width:85px;height:24px;background:#696969"></div>
<div class="btn" style="left:652px;top:30px;width:83px;height:22px"></div>
<svg class="a" style="left:667px;top:30px" width="24" height="20" viewBox="0 0 24 20" shape-rendering="crispEdges"><path fill="#a0a0a0" d="M18 3h1v1h-1zM17 4h1v1h-1zM19 4h1v1h-1zM16 5h1v1h-1zM19 5h1v1h-1zM15 6h1v1h-1zM19 6h1v1h-1zM14 7h1v1h-1zM18 7h1v1h-1zM13 8h1v1h-1zM17 8h1v1h-1zM12 9h1v1h-1zM16 9h1v1h-1zM5 10h1v1h-1zM11 10h1v1h-1zM15 10h1v1h-1zM4 11h1v1h-1zM6 11h1v1h-1zM10 11h1v1h-1zM14 11h1v1h-1zM4 12h1v1h-1zM7 12h1v1h-1zM10 12h1v1h-1zM13 12h1v1h-1zM4 13h1v1h-1zM8 13h2v1h-2zM12 13h1v1h-1zM5 14h1v1h-1zM11 14h1v1h-1zM6 15h1v1h-1zM10 15h1v1h-1zM7 16h1v1h-1zM9 16h1v1h-1zM8 17h2v1h-2z"/><path fill="#f0f0f0" d="M18 4h1v1h-1zM17 5h2v1h-2zM16 6h3v1h-3zM15 7h3v1h-3zM14 8h3v1h-3zM13 9h3v1h-3zM12 10h3v1h-3zM5 11h1v1h-1zM11 11h3v1h-3zM5 12h2v1h-2zM11 12h2v1h-2zM5 13h3v1h-3zM10 13h2v1h-2zM6 14h5v1h-5zM7 15h3v1h-3zM8 16h1v1h-1z"/><path fill="#fff" d="M20 5h1v1h-1zM20 6h1v1h-1zM20 7h1v1h-1zM19 8h1v1h-1zM18 9h1v1h-1zM17 10h1v1h-1zM16 11h1v1h-1zM15 12h1v1h-1zM14 13h1v1h-1zM13 14h1v1h-1zM12 15h1v1h-1zM11 16h1v1h-1zM10 17h1v1h-1zM9 18h2v1h-2z"/></svg>
<span class="t dis" style="left:692.3px;top:35.7px;transform:scaleX(0.8663);color:#fff"><u style="border-color:#fff">A</u>pply</span>
<span class="t dis" style="left:691.3px;top:34.7px;transform:scaleX(0.8663);"><u style="border-color:#a0a0a0">A</u>pply</span>
<span class="t " style="left:742.3px;top:33.7px;transform:scaleX(0.8575);">Value:</span>
<div class="inp" style="left:797px;top:30px;width:26px;height:20px;"></div>
<span class="t " style="left:799.9px;top:32.7px;transform:scaleX(0.8845);">32</span>
<i class="tsp" style="left:824px;top:30px"></i>
<span class="t " style="left:846.6px;top:33.7px;transform:scaleX(0.8790);">inc:</span>
<i class="tsp" style="left:864px;top:30px"></i>
<span class="t " style="left:895.8px;top:33.7px;">X:</span>
<div class="inp" style="left:907px;top:30px;width:24px;height:20px;"></div>
<span class="t " style="left:909.9px;top:32.7px;transform:scaleX(0.8629);">14</span>
<i class="tsp n" style="left:932px;top:30px"></i>
<span class="t " style="left:951.9px;top:33.7px;">Y:</span>
<div class="inp" style="left:963px;top:30px;width:24px;height:20px;"></div>
<span class="t " style="left:966.0px;top:32.7px;transform:scaleX(0.8629);">13</span>
<i class="tsp n" style="left:988px;top:30px"></i>
<div class="chk" style="left:1015px;top:35px"></div>
<span class="t " style="left:1032.8px;top:33.7px;transform:scaleX(0.8905);">Hex</span>
<span class="t " style="left:1076.7px;top:33.7px;transform:scaleX(0.8727);">Seek:</span>
<div class="inp" style="left:1110px;top:30px;width:79px;height:20px;"></div>
<div class="btn" style="left:1192px;top:29px;width:62px;height:24px"></div>
<span class="t " style="left:1212.7px;top:35.0px;transform:scaleX(0.8632);">Find</span>
<div class="btn" style="left:1255px;top:29px;width:73px;height:24px"></div>
<span class="t dis" style="left:1269.6px;top:35.0px;transform:scaleX(0.8615);">Find next</span>
<div class="a" style="left:647px;top:54px;width:1px;height:23px;background:#fff;"></div>
<div class="a" style="left:782px;top:54px;width:1px;height:23px;background:#a0a0a0;"></div>
<div class="a" style="left:783px;top:54px;width:1px;height:23px;background:#fff;"></div>
<div class="a" style="left:647px;top:77px;width:702px;height:1px;background:#a0a0a0;"></div>
<span class="t " style="left:675.8px;top:57.7px;transform:scaleX(0.8326);">Start address:</span>
<div class="inp" style="left:744px;top:56px;width:36px;height:19px;"></div>
<span class="t " style="left:746.3px;top:57.7px;transform:scaleX(0.8701);">0386</span>
<div class="a" style="left:790px;top:57px;width:570px;height:8px;background:#fff;border-top:1px solid #a0a0a0;border-left:1px solid #a0a0a0;border-bottom:1px solid #e3e3e3;box-shadow:inset 1px 1px 0 #696969"></div>
<svg class="a" style="left:811px;top:56px" width="7" height="15" viewBox="0 0 7 15"><path d="M0.5 0.5H5.5V10.5L3 13.5L0.5 10.5Z" fill="#f0f0f0" stroke="#fff" stroke-width="1"/><path d="M6 0V11L3 14.2" fill="none" stroke="#696969" stroke-width="1.2"/><path d="M5 1V10.5L3 13" fill="none" stroke="#a0a0a0" stroke-width="1"/></svg>
<div class="a" style="left:793px;top:71px;width:560px;height:3px;background:#000;"></div>
<div class="a" style="left:647px;top:78px;width:710px;height:440px;background:#fff;border-top:1px solid #a0a0a0;border-left:1px solid #a0a0a0;border-bottom:1px solid #fff;box-shadow:inset 1px 1px 0 #696969"></div>
<div class="hc" style="left:649px;top:80px;width:45px;height:25px"></div>
<div class="hc" style="left:694px;top:80px;width:45px;height:25px;line-height:23px">00</div>
<div class="hc" style="left:739px;top:80px;width:45px;height:25px;line-height:23px">01</div>
<div class="hc" style="left:784px;top:80px;width:45px;height:25px;line-height:23px">02</div>
<div class="hc" style="left:829px;top:80px;width:45px;height:25px;line-height:23px">03</div>
<div class="hc" style="left:874px;top:80px;width:45px;height:25px;line-height:23px">04</div>
<div class="hc" style="left:919px;top:80px;width:45px;height:25px;line-height:23px">05</div>
<div class="hc" style="left:964px;top:80px;width:45px;height:25px;line-height:23px">06</div>
<div class="hc" style="left:1009px;top:80px;width:45px;height:25px;line-height:23px">07</div>
<div class="hc" style="left:1054px;top:80px;width:45px;height:25px;line-height:23px">08</div>
<div class="hc" style="left:1099px;top:80px;width:45px;height:25px;line-height:23px">09</div>
<div class="hc" style="left:1144px;top:80px;width:45px;height:25px;line-height:23px">0A</div>
<div class="hc" style="left:1189px;top:80px;width:45px;height:25px;line-height:23px">0B</div>
<div class="hc" style="left:1234px;top:80px;width:45px;height:25px;line-height:23px">0C</div>
<div class="hc" style="left:1279px;top:80px;width:45px;height:25px;line-height:23px">0D</div>
<div class="hc" style="left:649px;top:105px;width:45px;height:25px;line-height:23px">0386</div>
<div class="c" style="left:694px;top:105px;background:#00f;color:#fff">32<i></i><b class="foc" style="border:1px solid #000"></b><b class="foc" style="border-color:#ff0"></b></div>
<div class="c v32" style="left:739px;top:105px">32<i></i></div>
<div class="c v32" style="left:784px;top:105px">32<i></i></div>
<div class="c v32" style="left:829px;top:105px">32<i></i></div>
<div class="c v32" style="left:874px;top:105px">32<i></i></div>
<div class="c v32" style="left:919px;top:105px">32<i></i></div>
<div class="c v32" style="left:964px;top:105px">32<i></i></div>
<div class="c v32" style="left:1009px;top:105px">32<i></i></div>
<div class="c v32" style="left:1054px;top:105px">32<i></i></div>
<div class="c v32" style="left:1099px;top:105px">32<i></i></div>
<div class="c v32" style="left:1144px;top:105px">32<i></i></div>
<div class="c v32" style="left:1189px;top:105px">32<i></i></div>
<div class="c v36" style="left:1234px;top:105px">36<i></i></div>
<div class="c v36" style="left:1279px;top:105px">36<i></i></div>
<div class="hc" style="left:649px;top:130px;width:45px;height:25px;line-height:23px">0394</div>
<div class="c v32" style="left:694px;top:130px">32<i></i></div>
<div class="c v32" style="left:739px;top:130px">32<i></i></div>
<div class="c v32" style="left:784px;top:130px">32<i></i></div>
<div class="c v32" style="left:829px;top:130px">32<i></i></div>
<div class="c v32" style="left:874px;top:130px">32<i></i></div>
<div class="c v32" style="left:919px;top:130px">32<i></i></div>
<div class="c v32" style="left:964px;top:130px">32<i></i></div>
<div class="c v32" style="left:1009px;top:130px">32<i></i></div>
<div class="c v32" style="left:1054px;top:130px">32<i></i></div>
<div class="c v32" style="left:1099px;top:130px">32<i></i></div>
<div class="c v32" style="left:1144px;top:130px">32<i></i></div>
<div class="c v32" style="left:1189px;top:130px">32<i></i></div>
<div class="c v43" style="left:1234px;top:130px">43<i></i></div>
<div class="c v43" style="left:1279px;top:130px">43<i></i></div>
<div class="hc" style="left:649px;top:155px;width:45px;height:25px;line-height:23px">03A2</div>
<div class="c v32" style="left:694px;top:155px">32<i></i></div>
<div class="c v32" style="left:739px;top:155px">32<i></i></div>
<div class="c v32" style="left:784px;top:155px">32<i></i></div>
<div class="c v32" style="left:829px;top:155px">32<i></i></div>
<div class="c v32" style="left:874px;top:155px">32<i></i></div>
<div class="c v32" style="left:919px;top:155px">32<i></i></div>
<div class="c v32" style="left:964px;top:155px">32<i></i></div>
<div class="c v32" style="left:1009px;top:155px">32<i></i></div>
<div class="c v32" style="left:1054px;top:155px">32<i></i></div>
<div class="c v32" style="left:1099px;top:155px">32<i></i></div>
<div class="c v32" style="left:1144px;top:155px">32<i></i></div>
<div class="c v32" style="left:1189px;top:155px">32<i></i></div>
<div class="c v50" style="left:1234px;top:155px">50<i></i></div>
<div class="c v50" style="left:1279px;top:155px">50<i></i></div>
<div class="hc" style="left:649px;top:180px;width:45px;height:25px;line-height:23px">03B0</div>
<div class="c v32" style="left:694px;top:180px">32<i></i></div>
<div class="c v32" style="left:739px;top:180px">32<i></i></div>
<div class="c v32" style="left:784px;top:180px">32<i></i></div>
<div class="c v32" style="left:829px;top:180px">32<i></i></div>
<div class="c v32" style="left:874px;top:180px">32<i></i></div>
<div class="c v32" style="left:919px;top:180px">32<i></i></div>
<div class="c v32" style="left:964px;top:180px">32<i></i></div>
<div class="c v32" style="left:1009px;top:180px">32<i></i></div>
<div class="c v32" style="left:1054px;top:180px">32<i></i></div>
<div class="c v32" style="left:1099px;top:180px">32<i></i></div>
<div class="c v32" style="left:1144px;top:180px">32<i></i></div>
<div class="c v36" style="left:1189px;top:180px">36<i></i></div>
<div class="c v53" style="left:1234px;top:180px">53<i></i></div>
<div class="c v53" style="left:1279px;top:180px">53<i></i></div>
<div class="hc" style="left:649px;top:205px;width:45px;height:25px;line-height:23px">03BE</div>
<div class="c v32" style="left:694px;top:205px">32<i></i></div>
<div class="c v32" style="left:739px;top:205px">32<i></i></div>
<div class="c v32" style="left:784px;top:205px">32<i></i></div>
<div class="c v32" style="left:829px;top:205px">32<i></i></div>
<div class="c v32" style="left:874px;top:205px">32<i></i></div>
<div class="c v32" style="left:919px;top:205px">32<i></i></div>
<div class="c v32" style="left:964px;top:205px">32<i></i></div>
<div class="c v32" style="left:1009px;top:205px">32<i></i></div>
<div class="c v32" style="left:1054px;top:205px">32<i></i></div>
<div class="c v32" style="left:1099px;top:205px">32<i></i></div>
<div class="c v36" style="left:1144px;top:205px">36<i></i></div>
<div class="c v42" style="left:1189px;top:205px">42<i></i></div>
<div class="c v55" style="left:1234px;top:205px">55<i></i></div>
<div class="c v57" style="left:1279px;top:205px">57<i></i></div>
<div class="hc" style="left:649px;top:230px;width:45px;height:25px;line-height:23px">03CC</div>
<div class="c v32" style="left:694px;top:230px">32<i></i></div>
<div class="c v32" style="left:739px;top:230px">32<i></i></div>
<div class="c v32" style="left:784px;top:230px">32<i></i></div>
<div class="c v32" style="left:829px;top:230px">32<i></i></div>
<div class="c v32" style="left:874px;top:230px">32<i></i></div>
<div class="c v32" style="left:919px;top:230px">32<i></i></div>
<div class="c v32" style="left:964px;top:230px">32<i></i></div>
<div class="c v32" style="left:1009px;top:230px">32<i></i></div>
<div class="c v32" style="left:1054px;top:230px">32<i></i></div>
<div class="c v32" style="left:1099px;top:230px">32<i></i></div>
<div class="c v42" style="left:1144px;top:230px">42<i></i></div>
<div class="c v44" style="left:1189px;top:230px">44<i></i></div>
<div class="c v56" style="left:1234px;top:230px">56<i></i></div>
<div class="c v60" style="left:1279px;top:230px">60<i></i></div>
<div class="hc" style="left:649px;top:255px;width:45px;height:25px;line-height:23px">03DA</div>
<div class="c v32" style="left:694px;top:255px">32<i></i></div>
<div class="c v32" style="left:739px;top:255px">32<i></i></div>
<div class="c v32" style="left:784px;top:255px">32<i></i></div>
<div class="c v32" style="left:829px;top:255px">32<i></i></div>
<div class="c v32" style="left:874px;top:255px">32<i></i></div>
<div class="c v32" style="left:919px;top:255px">32<i></i></div>
<div class="c v32" style="left:964px;top:255px">32<i></i></div>
<div class="c v32" style="left:1009px;top:255px">32<i></i></div>
<div class="c v32" style="left:1054px;top:255px">32<i></i></div>
<div class="c v32" style="left:1099px;top:255px">32<i></i></div>
<div class="c v44" style="left:1144px;top:255px">44<i></i></div>
<div class="c v48" style="left:1189px;top:255px">48<i></i></div>
<div class="c v59" style="left:1234px;top:255px">59<i></i></div>
<div class="c v67" style="left:1279px;top:255px">67<i></i></div>
<div class="hc" style="left:649px;top:280px;width:45px;height:25px;line-height:23px">03E8</div>
<div class="c v32" style="left:694px;top:280px">32<i></i></div>
<div class="c v32" style="left:739px;top:280px">32<i></i></div>
<div class="c v32" style="left:784px;top:280px">32<i></i></div>
<div class="c v32" style="left:829px;top:280px">32<i></i></div>
<div class="c v32" style="left:874px;top:280px">32<i></i></div>
<div class="c v32" style="left:919px;top:280px">32<i></i></div>
<div class="c v32" style="left:964px;top:280px">32<i></i></div>
<div class="c v32" style="left:1009px;top:280px">32<i></i></div>
<div class="c v32" style="left:1054px;top:280px">32<i></i></div>
<div class="c v38" style="left:1099px;top:280px">38<i></i></div>
<div class="c v46" style="left:1144px;top:280px">46<i></i></div>
<div class="c v51" style="left:1189px;top:280px">51<i></i></div>
<div class="c v65" style="left:1234px;top:280px">65<i></i></div>
<div class="c v79" style="left:1279px;top:280px">79<i></i></div>
<div class="hc" style="left:649px;top:305px;width:45px;height:25px;line-height:23px">03F6</div>
<div class="c v54" style="left:694px;top:305px">54<i></i></div>
<div class="c v54" style="left:739px;top:305px">54<i></i></div>
<div class="c v55" style="left:784px;top:305px">55<i></i></div>
<div class="c v32" style="left:829px;top:305px">32<i></i></div>
<div class="c v32" style="left:874px;top:305px">32<i></i></div>
<div class="c v32" style="left:919px;top:305px">32<i></i></div>
<div class="c v32" style="left:964px;top:305px">32<i></i></div>
<div class="c v32" style="left:1009px;top:305px">32<i></i></div>
<div class="c v32" style="left:1054px;top:305px">32<i></i></div>
<div class="c v42" style="left:1099px;top:305px">42<i></i></div>
<div class="c v49" style="left:1144px;top:305px">49<i></i></div>
<div class="c v55" style="left:1189px;top:305px">55<i></i></div>
<div class="c v72" style="left:1234px;top:305px">72<i></i></div>
<div class="c v91" style="left:1279px;top:305px">91<i></i></div>
<div class="hc" style="left:649px;top:330px;width:45px;height:25px;line-height:23px">0404</div>
<div class="c v54" style="left:694px;top:330px">54<i></i></div>
<div class="c v54" style="left:739px;top:330px">54<i></i></div>
<div class="c v55" style="left:784px;top:330px">55<i></i></div>
<div class="c v54" style="left:829px;top:330px">54<i></i></div>
<div class="c v50" style="left:874px;top:330px">50<i></i></div>
<div class="c v52" style="left:919px;top:330px">52<i></i></div>
<div class="c v51" style="left:964px;top:330px">51<i></i></div>
<div class="c v32" style="left:1009px;top:330px">32<i></i></div>
<div class="c v32" style="left:1054px;top:330px">32<i></i></div>
<div class="c v46" style="left:1099px;top:330px">46<i></i></div>
<div class="c v54" style="left:1144px;top:330px">54<i></i></div>
<div class="c v62" style="left:1189px;top:330px">62<i></i></div>
<div class="c v78" style="left:1234px;top:330px">78<i></i></div>
<div class="c v91" style="left:1279px;top:330px">91<i></i></div>
<div class="hc" style="left:649px;top:355px;width:45px;height:25px;line-height:23px">0412</div>
<div class="c v54" style="left:694px;top:355px">54<i></i></div>
<div class="c v54" style="left:739px;top:355px">54<i></i></div>
<div class="c v55" style="left:784px;top:355px">55<i></i></div>
<div class="c v54" style="left:829px;top:355px">54<i></i></div>
<div class="c v50" style="left:874px;top:355px">50<i></i></div>
<div class="c v52" style="left:919px;top:355px">52<i></i></div>
<div class="c v51" style="left:964px;top:355px">51<i></i></div>
<div class="c v51" style="left:1009px;top:355px">51<i></i></div>
<div class="c v49" style="left:1054px;top:355px">49<i></i></div>
<div class="c v52" style="left:1099px;top:355px">52<i></i></div>
<div class="c v59" style="left:1144px;top:355px">59<i></i></div>
<div class="c v62" style="left:1189px;top:355px">62<i></i></div>
<div class="c v78" style="left:1234px;top:355px">78<i></i></div>
<div class="c v91" style="left:1279px;top:355px">91<i></i></div>
<div class="hc" style="left:649px;top:380px;width:45px;height:25px;line-height:23px">0420</div>
<div class="c v54" style="left:694px;top:380px">54<i></i></div>
<div class="c v54" style="left:739px;top:380px">54<i></i></div>
<div class="c v55" style="left:784px;top:380px">55<i></i></div>
<div class="c v54" style="left:829px;top:380px">54<i></i></div>
<div class="c v50" style="left:874px;top:380px">50<i></i></div>
<div class="c v52" style="left:919px;top:380px">52<i></i></div>
<div class="c v51" style="left:964px;top:380px">51<i></i></div>
<div class="c v51" style="left:1009px;top:380px">51<i></i></div>
<div class="c v49" style="left:1054px;top:380px">49<i></i></div>
<div class="c v52" style="left:1099px;top:380px">52<i></i></div>
<div class="c v59" style="left:1144px;top:380px">59<i></i></div>
<div class="c v62" style="left:1189px;top:380px">62<i></i></div>
<div class="c v78" style="left:1234px;top:380px">78<i></i></div>
<div class="c v91" style="left:1279px;top:380px">91<i></i></div>
<div class="hc" style="left:649px;top:405px;width:45px;height:25px;line-height:23px">042E</div>
<div class="c v54" style="left:694px;top:405px">54<i></i></div>
<div class="c v54" style="left:739px;top:405px">54<i></i></div>
<div class="c v55" style="left:784px;top:405px">55<i></i></div>
<div class="c v54" style="left:829px;top:405px">54<i></i></div>
<div class="c v50" style="left:874px;top:405px">50<i></i></div>
<div class="c v52" style="left:919px;top:405px">52<i></i></div>
<div class="c v51" style="left:964px;top:405px">51<i></i></div>
<div class="c v51" style="left:1009px;top:405px">51<i></i></div>
<div class="c v49" style="left:1054px;top:405px">49<i></i></div>
<div class="c v52" style="left:1099px;top:405px">52<i></i></div>
<div class="c v59" style="left:1144px;top:405px">59<i></i></div>
<div class="c v62" style="left:1189px;top:405px">62<i></i></div>
<div class="c v78" style="left:1234px;top:405px">78<i></i></div>
<div class="c v91" style="left:1279px;top:405px">91<i></i></div>
</div></div>
</body></html>
